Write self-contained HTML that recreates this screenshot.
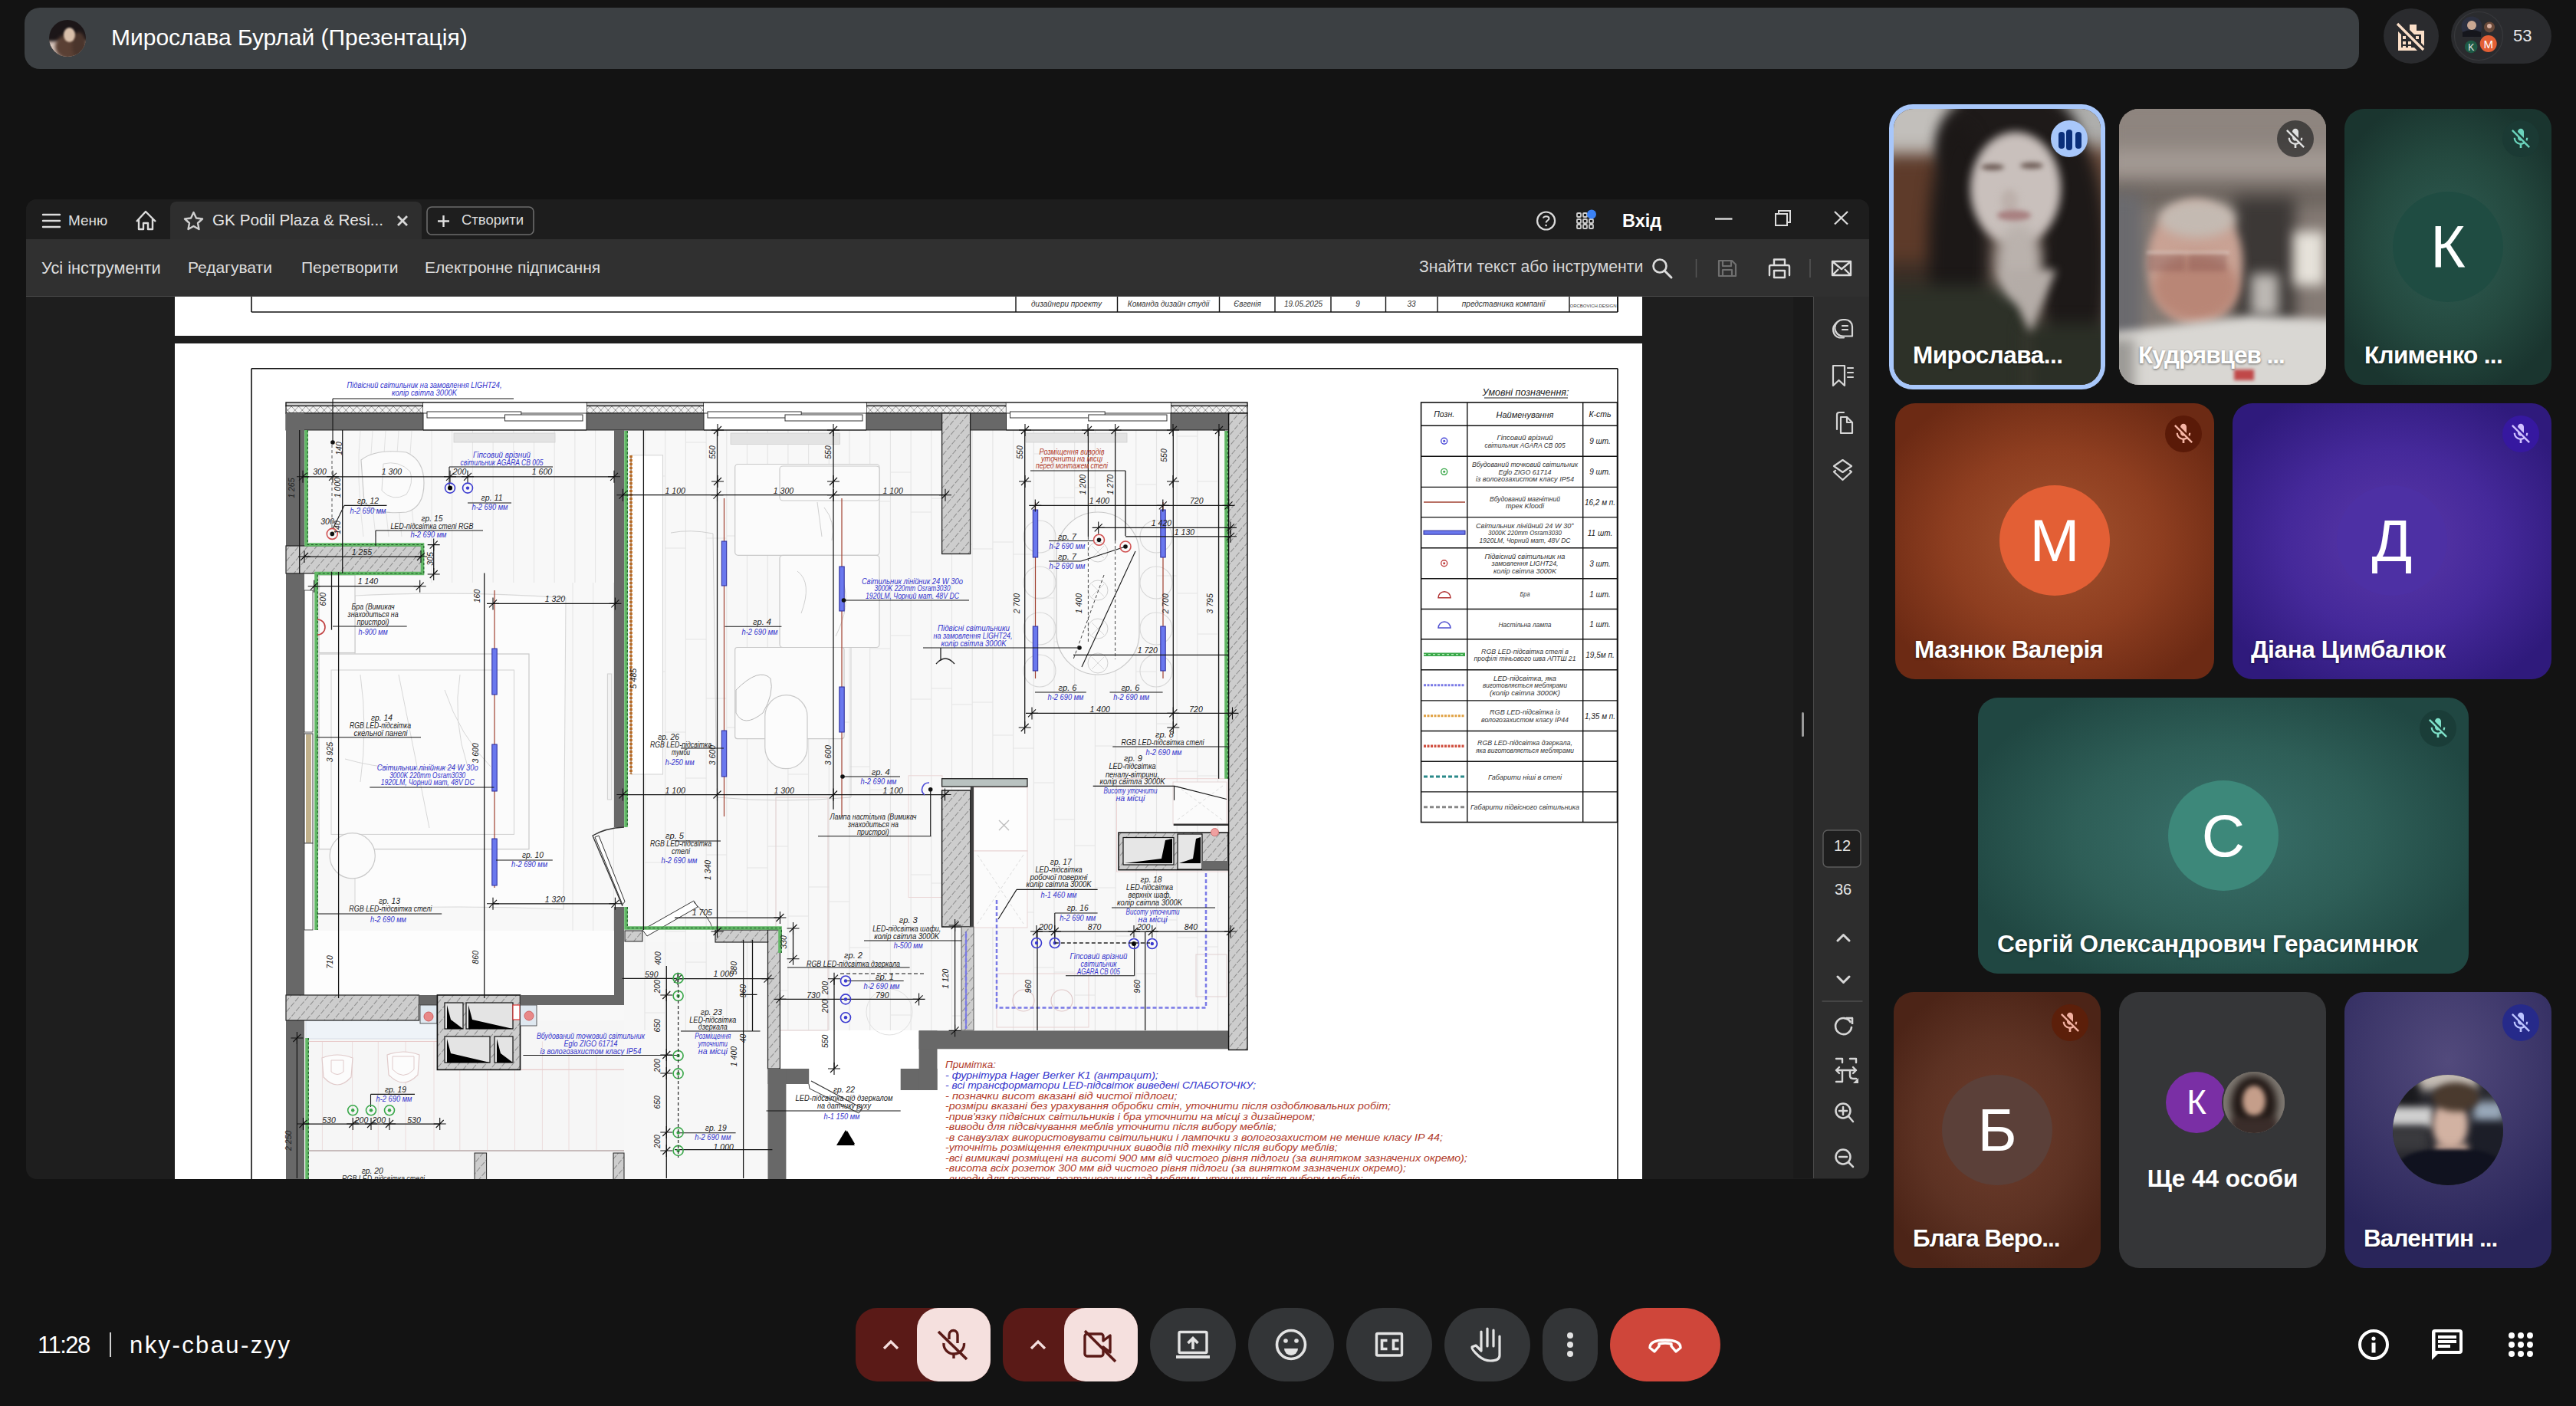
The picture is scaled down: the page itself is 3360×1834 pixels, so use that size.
<!DOCTYPE html>
<html><head><meta charset="utf-8">
<style>
*{margin:0;padding:0;box-sizing:border-box}
html,body{width:3360px;height:1834px;overflow:hidden;background:#131313;font-family:"Liberation Sans",sans-serif;color:#fff}
.a{position:absolute}
.t{position:absolute;white-space:nowrap;line-height:1}
</style></head><body>

<!-- TOP BAR -->
<div class="a" style="left:32px;top:10px;width:3045px;height:80px;border-radius:20px;background:#3c4043"></div>
<div class="a" style="left:64px;top:26px;width:48px;height:48px;border-radius:50%;overflow:hidden;background:#1c1618">
<div class="a" style="left:-6px;top:28px;width:60px;height:30px;background:#d8c6bc;filter:blur(2px)"></div>
<div class="a" style="left:8px;top:18px;width:40px;height:34px;border-radius:50%;background:#5a4034;filter:blur(2px)"></div>
<div class="a" style="left:30px;top:16px;width:18px;height:34px;border-radius:50%;background:#4a352c;filter:blur(2px)"></div>
<div class="a" style="left:19px;top:10px;width:15px;height:19px;border-radius:50%;background:#d8bfaa;filter:blur(1px)"></div>
</div>
<div class="t" style="left:145px;top:34px;font-size:30px;color:#fff">Мирослава Бурлай (Презентація)</div>

<div class="a" style="left:3109px;top:11px;width:72px;height:72px;border-radius:50%;background:#2a2b2e"></div>
<div class="a" style="left:3197px;top:11px;width:131px;height:72px;border-radius:36px;background:#2a2b2e"></div>
<div class="t" style="left:3278px;top:36px;font-size:22px;color:#e8e8e8">53</div>

<!-- WINDOW -->
<div class="a" style="left:34px;top:260px;width:2404px;height:1278px;border-radius:14px;background:#1e1e1e;overflow:hidden">
  <div class="a" style="left:0;top:0;width:2404px;height:52px;background:#1d1d1d"></div>
  <div class="a" style="left:188px;top:3px;width:328px;height:49px;border-radius:8px 8px 0 0;background:#2e2e2e"></div>
  <div class="a" style="left:0;top:52px;width:2404px;height:75px;background:#303030"></div>
  <div class="a" style="left:2331px;top:127px;width:73px;height:1150px;background:#2d2d2d;border-left:1px solid #4a4a4a"></div>
  <div class="a" style="left:0;top:126px;width:2331px;height:1px;background:#4a4a4a"></div>
  <div class="a" style="left:2305px;top:127px;width:26px;height:1150px;background:#1a1a1a"></div>
</div>
<!-- window chrome -->
<svg class="a" style="left:0;top:250px" width="2450" height="140" viewBox="0 250 2450 140" fill="none" stroke="#dcdcdc" stroke-width="2.4">
  <path d="M56 280H78M56 288H78M56 296H78" stroke-linecap="round"/>
  <path d="M178 289L190 276L203 289M181 286V299H187V291H193V299H199V286" stroke-linejoin="round"/>
  <path d="M252.5 277L256 284.5L264 285.5L258 291L259.5 299L252.5 295L245.5 299L247 291L241 285.5L249 284.5Z" stroke-linejoin="round" stroke="#cfcfcf"/>
  <path d="M519 282L531 294M531 282L519 294" stroke-width="2.8" stroke="#d8d8d8"/>
  <rect x="557" y="270" width="139" height="36" rx="6" stroke="#6c6c6c" stroke-width="1.6" fill="#1e1e1e"/>
  <path d="M578.5 281V296M571 288.5H586" stroke-width="2.4" stroke="#e0e0e0"/>
  <circle cx="2016.6" cy="288" r="11.5" stroke-width="2.2"/>
  <path d="M2013 284.5C2013 281.5 2020.5 281.5 2020.5 285C2020.5 287.5 2016.6 287.5 2016.6 290.5" stroke-width="2"/>
  <circle cx="2016.6" cy="294" r="1.3" fill="#dcdcdc" stroke="none"/>
  <g fill="none" stroke="#cfcfcf" stroke-width="1.8">
    <rect x="2057" y="278" width="5" height="5" rx="1"/><rect x="2065" y="278" width="5" height="5" rx="1"/>
    <rect x="2057" y="286" width="5" height="5" rx="1"/><rect x="2065" y="286" width="5" height="5" rx="1"/><rect x="2073" y="286" width="5" height="5" rx="1"/>
    <rect x="2057" y="293" width="5" height="5" rx="1"/><rect x="2065" y="293" width="5" height="5" rx="1"/><rect x="2073" y="293" width="5" height="5" rx="1"/>
  </g>
  <circle cx="2076" cy="279.5" r="6" fill="#3b82f6" stroke="none"/>
  <path d="M2237 285.5H2259.5" stroke-width="2.4"/>
  <path d="M2316 279H2331V294H2316Z M2320 279V275H2335V290H2331" stroke-width="2"/>
  <path d="M2393 276L2410 292.5M2410 276L2393 292.5" stroke-width="2.2"/>
  <circle cx="2165" cy="347" r="8.5" stroke-width="2.6"/>
  <path d="M2171 353L2180 362" stroke-width="3" stroke-linecap="round"/>
  <path d="M2212.5 338V362M2361 338V362" stroke="#555" stroke-width="1.5"/>
  <path d="M2242 340H2259L2264 345V360H2242Z M2247 340V347H2258V340 M2247 360V352H2259V360" stroke="#6f6f6f" stroke-width="2.2" stroke-linejoin="round"/>
  <path d="M2314 346V338.5H2328V346 M2309 359H2308V347.5Q2308 346 2310 346H2332Q2334 346 2334 348V359H2333 M2314 353H2328V362H2314Z" stroke-width="2.4" stroke-linejoin="round"/>
  <path d="M2390 341H2414V359H2390Z M2390 341L2402 351L2414 341 M2390 359L2398 351 M2414 359L2406 351" stroke-width="2.4" stroke-linejoin="round"/>
</svg>
<!-- right doc panel icons -->
<svg class="a" style="left:2366px;top:387px" width="72" height="1150" viewBox="2366 387 72 1150" fill="none" stroke="#d6d6d6" stroke-width="2.2" stroke-linejoin="round" stroke-linecap="round">
  <path d="M2395 421.5A11 11 0 0 0 2399 440.5H2405" />
  <path d="M2404 417H2407A9 9 0 0 1 2416 426V438.5H2404A9 9 0 0 1 2404 417Z"/>
  <path d="M2403 425H2410M2403 430H2410"/>
  <path d="M2391 477H2406V503L2398.5 496L2391 503Z"/>
  <path d="M2410 480H2417M2410 486H2417M2410 492H2417"/>
  <path d="M2396 560V541A3 3 0 0 1 2399 538H2405"/>
  <path d="M2401 544H2409L2416 551V565H2401Z M2409 544V551H2416"/>
  <path d="M2403.5 600L2415 608L2403.5 616L2392 608Z"/>
  <path d="M2394 614L2392 615.5L2403.5 626L2415 615.5L2413 614"/>
  <rect x="2378" y="1083" width="49" height="48" rx="6" fill="#1e1e1e" stroke="#5c5c5c" stroke-width="1.4"/>
  <path d="M2397 1227L2404.5 1219.5L2412 1227M2397 1274L2404.5 1281.5L2412 1274" stroke-width="3"/>
  <path d="M2377 1306H2429" stroke="#4e4e4e" stroke-width="1.4"/>
  <path d="M2413.5 1333A10.5 10.5 0 1 0 2415 1340" stroke-width="2.6"/>
  <path d="M2408 1328H2416V1336" stroke-width="2.6" stroke-linecap="butt"/>
  <path d="M2395 1381H2403V1386M2413 1381H2421V1386M2395 1411H2403V1397M2413 1397V1403Q2413 1407 2417 1407H2421" stroke-width="2.4"/>
  <path d="M2395 1396H2421M2399 1392L2395 1396L2399 1400M2417 1392L2421 1396L2417 1400" stroke-width="2.4"/>
  <path d="M2417 1413H2424V1406Z" fill="#d6d6d6" stroke="none"/>
  <circle cx="2404" cy="1449" r="9.5" stroke-width="2.5"/><path d="M2411 1456L2417 1463M2404 1444V1454M2399 1449H2409" stroke-width="2.5"/>
  <circle cx="2404" cy="1509" r="9.5" stroke-width="2.5"/><path d="M2411 1516L2417 1522M2399 1509H2409" stroke-width="2.5"/>
</svg>
<div class="t" style="left:2392px;top:1093px;font-size:20px;color:#e4e4e4">12</div>
<div class="t" style="left:2393px;top:1150px;font-size:20px;color:#e4e4e4">36</div>
<div class="a" style="left:2350px;top:929px;width:3px;height:32px;border-radius:2px;background:#9a9a9a"></div>
<div class="t" style="left:89px;top:278px;font-size:19px;color:#dedede">Меню</div>
<div class="t" style="left:277px;top:277px;font-size:20.7px;color:#e6e6e6">GK Podil Plaza &amp; Resi...</div>
<div class="t" style="left:602px;top:278px;font-size:18.5px;color:#dcdcdc">Створити</div>
<div class="t" style="left:2116px;top:277px;font-size:23.5px;font-weight:bold;color:#fff">Вхід</div>
<div class="t" style="left:54px;top:339px;font-size:21.8px;color:#dedede">Усі інструменти</div>
<div class="t" style="left:245px;top:338px;font-size:21px;color:#dedede">Редагувати</div>
<div class="t" style="left:393px;top:338px;font-size:21px;color:#dedede">Перетворити</div>
<div class="t" style="left:554px;top:338px;font-size:21px;color:#dedede">Електронне підписання</div>
<div class="t" style="left:1851px;top:337px;font-size:21.2px;color:#d8d8d8">Знайти текст або інструменти</div>

<!-- DOC PAGE -->
<div class="a" style="left:228px;top:387px;width:1914px;height:51px;background:#fff"></div>
<div class="a" style="left:228px;top:448px;width:1914px;height:1090px;background:#fff"></div>
<!--PLAN_START--><svg class="a" style="left:228px;top:387px" width="1914" height="1151" viewBox="228 387 1914 1151" font-family="Liberation Sans, sans-serif"><defs>
<pattern id="hat" width="9" height="9" patternUnits="userSpaceOnUse" patternTransform="rotate(40)">
<rect width="9" height="9" fill="#cdcdcd"/><line x1="0" y1="0" x2="0" y2="9" stroke="#6a6a6a" stroke-width="1.3" stroke-dasharray="6 2"/></pattern>
<pattern id="xh" width="9.5" height="10" patternUnits="userSpaceOnUse">
<rect width="9.5" height="10" fill="#f2f2f2"/><path d="M0 0L9.5 10M9.5 0L0 10" stroke="#8a8a8a" stroke-width="0.9"/></pattern>
<clipPath id="pg"><rect x="228" y="387" width="1914" height="1151"/></clipPath>
</defs><g clip-path="url(#pg)"><line x1="328" y1="407" x2="2110" y2="407" stroke="#111" stroke-width="1.6" /><line x1="328" y1="387" x2="328" y2="407" stroke="#111" stroke-width="1.6" /><line x1="1325" y1="387" x2="1325" y2="407" stroke="#111" stroke-width="1.4" /><line x1="1457.5" y1="387" x2="1457.5" y2="407" stroke="#111" stroke-width="1.4" /><line x1="1590.5" y1="387" x2="1590.5" y2="407" stroke="#111" stroke-width="1.4" /><line x1="1663" y1="387" x2="1663" y2="407" stroke="#111" stroke-width="1.4" /><line x1="1736" y1="387" x2="1736" y2="407" stroke="#111" stroke-width="1.4" /><line x1="1807.5" y1="387" x2="1807.5" y2="407" stroke="#111" stroke-width="1.4" /><line x1="1875" y1="387" x2="1875" y2="407" stroke="#111" stroke-width="1.4" /><line x1="2047" y1="387" x2="2047" y2="407" stroke="#111" stroke-width="1.4" /><line x1="2110" y1="387" x2="2110" y2="407" stroke="#111" stroke-width="1.4" /><text x="1391" y="400" font-size="10" fill="#333" text-anchor="middle" font-style="italic">дизайнери проекту</text><text x="1524" y="400" font-size="10" fill="#333" text-anchor="middle" font-style="italic">Команда дизайн студії</text><text x="1627" y="400" font-size="10" fill="#333" text-anchor="middle" font-style="italic">Євгенія</text><text x="1700" y="400" font-size="10" fill="#333" text-anchor="middle" font-style="italic">19.05.2025</text><text x="1771" y="400" font-size="10" fill="#333" text-anchor="middle" font-style="italic">9</text><text x="1841" y="400" font-size="10" fill="#333" text-anchor="middle" font-style="italic">33</text><text x="1961" y="400" font-size="10" fill="#333" text-anchor="middle" font-style="italic">представника компанії</text><text x="2078" y="401" font-size="6" fill="#333" text-anchor="middle" >ORCBOVICH.DESIGN</text><line x1="328" y1="480.7" x2="2110" y2="480.7" stroke="#111" stroke-width="1.6" /><line x1="328" y1="480.7" x2="328" y2="1540" stroke="#111" stroke-width="1.6" /><line x1="2110" y1="387" x2="2110" y2="407" stroke="#111" stroke-width="1.6" /><line x1="2110" y1="480.7" x2="2110" y2="1540" stroke="#111" stroke-width="1.6" /><rect x="397" y="561" width="1206" height="783" fill="#f8f8f8" /><rect x="397" y="1214" width="404" height="84" fill="#fdfdfd" /><rect x="399" y="1331" width="415" height="209" fill="#f6f6f6" /><rect x="814" y="1229" width="188" height="311" fill="#f7f7f7" /><line x1="841.0" y1="561" x2="841.0" y2="1344" stroke="#e4e4e4" stroke-width="1.1" /><line x1="867.7" y1="561" x2="867.7" y2="1344" stroke="#e4e4e4" stroke-width="1.1" /><line x1="894.4" y1="561" x2="894.4" y2="1344" stroke="#e4e4e4" stroke-width="1.1" /><line x1="921.1" y1="561" x2="921.1" y2="1344" stroke="#e4e4e4" stroke-width="1.1" /><line x1="947.8" y1="561" x2="947.8" y2="1344" stroke="#e4e4e4" stroke-width="1.1" /><line x1="974.5" y1="561" x2="974.5" y2="1344" stroke="#e4e4e4" stroke-width="1.1" /><line x1="1001.2" y1="561" x2="1001.2" y2="1344" stroke="#e4e4e4" stroke-width="1.1" /><line x1="1027.9" y1="561" x2="1027.9" y2="1344" stroke="#e4e4e4" stroke-width="1.1" /><line x1="1054.6" y1="561" x2="1054.6" y2="1344" stroke="#e4e4e4" stroke-width="1.1" /><line x1="1081.3" y1="561" x2="1081.3" y2="1344" stroke="#e4e4e4" stroke-width="1.1" /><line x1="1108.0" y1="561" x2="1108.0" y2="1344" stroke="#e4e4e4" stroke-width="1.1" /><line x1="1134.7" y1="561" x2="1134.7" y2="1344" stroke="#e4e4e4" stroke-width="1.1" /><line x1="1161.4" y1="561" x2="1161.4" y2="1344" stroke="#e4e4e4" stroke-width="1.1" /><line x1="1188.1" y1="561" x2="1188.1" y2="1344" stroke="#e4e4e4" stroke-width="1.1" /><line x1="1214.8" y1="561" x2="1214.8" y2="1344" stroke="#e4e4e4" stroke-width="1.1" /><line x1="1241.5" y1="561" x2="1241.5" y2="1344" stroke="#e4e4e4" stroke-width="1.1" /><line x1="1268.2" y1="561" x2="1268.2" y2="1344" stroke="#e4e4e4" stroke-width="1.1" /><line x1="1294.9" y1="561" x2="1294.9" y2="1344" stroke="#e4e4e4" stroke-width="1.1" /><line x1="1321.6" y1="561" x2="1321.6" y2="1344" stroke="#e4e4e4" stroke-width="1.1" /><line x1="1348.3" y1="561" x2="1348.3" y2="1344" stroke="#e4e4e4" stroke-width="1.1" /><line x1="1375.0" y1="561" x2="1375.0" y2="1344" stroke="#e4e4e4" stroke-width="1.1" /><line x1="1401.6999999999998" y1="561" x2="1401.6999999999998" y2="1344" stroke="#e4e4e4" stroke-width="1.1" /><line x1="1428.4" y1="561" x2="1428.4" y2="1344" stroke="#e4e4e4" stroke-width="1.1" /><line x1="1455.1" y1="561" x2="1455.1" y2="1344" stroke="#e4e4e4" stroke-width="1.1" /><line x1="1481.8" y1="561" x2="1481.8" y2="1344" stroke="#e4e4e4" stroke-width="1.1" /><line x1="1508.5" y1="561" x2="1508.5" y2="1344" stroke="#e4e4e4" stroke-width="1.1" /><line x1="1535.1999999999998" y1="561" x2="1535.1999999999998" y2="1344" stroke="#e4e4e4" stroke-width="1.1" /><line x1="1561.9" y1="561" x2="1561.9" y2="1344" stroke="#e4e4e4" stroke-width="1.1" /><line x1="1588.6" y1="561" x2="1588.6" y2="1344" stroke="#e4e4e4" stroke-width="1.1" /><line x1="841.0" y1="621" x2="867.7" y2="621" stroke="#e4e4e4" stroke-width="1.0" /><line x1="841.0" y1="876" x2="867.7" y2="876" stroke="#e4e4e4" stroke-width="1.0" /><line x1="841.0" y1="1125" x2="867.7" y2="1125" stroke="#e4e4e4" stroke-width="1.0" /><line x1="841.0" y1="1321" x2="867.7" y2="1321" stroke="#e4e4e4" stroke-width="1.0" /><line x1="867.7" y1="715" x2="894.4000000000001" y2="715" stroke="#e4e4e4" stroke-width="1.0" /><line x1="867.7" y1="955" x2="894.4000000000001" y2="955" stroke="#e4e4e4" stroke-width="1.0" /><line x1="867.7" y1="1215" x2="894.4000000000001" y2="1215" stroke="#e4e4e4" stroke-width="1.0" /><line x1="894.4" y1="577" x2="921.1" y2="577" stroke="#e4e4e4" stroke-width="1.0" /><line x1="894.4" y1="834" x2="921.1" y2="834" stroke="#e4e4e4" stroke-width="1.0" /><line x1="894.4" y1="1015" x2="921.1" y2="1015" stroke="#e4e4e4" stroke-width="1.0" /><line x1="894.4" y1="1255" x2="921.1" y2="1255" stroke="#e4e4e4" stroke-width="1.0" /><line x1="921.1" y1="702" x2="947.8000000000001" y2="702" stroke="#e4e4e4" stroke-width="1.0" /><line x1="921.1" y1="911" x2="947.8000000000001" y2="911" stroke="#e4e4e4" stroke-width="1.0" /><line x1="921.1" y1="1115" x2="947.8000000000001" y2="1115" stroke="#e4e4e4" stroke-width="1.0" /><line x1="947.8" y1="699" x2="974.5" y2="699" stroke="#e4e4e4" stroke-width="1.0" /><line x1="947.8" y1="949" x2="974.5" y2="949" stroke="#e4e4e4" stroke-width="1.0" /><line x1="947.8" y1="1189" x2="974.5" y2="1189" stroke="#e4e4e4" stroke-width="1.0" /><line x1="974.5" y1="724" x2="1001.2" y2="724" stroke="#e4e4e4" stroke-width="1.0" /><line x1="974.5" y1="923" x2="1001.2" y2="923" stroke="#e4e4e4" stroke-width="1.0" /><line x1="974.5" y1="1132" x2="1001.2" y2="1132" stroke="#e4e4e4" stroke-width="1.0" /><line x1="1001.2" y1="694" x2="1027.9" y2="694" stroke="#e4e4e4" stroke-width="1.0" /><line x1="1001.2" y1="923" x2="1027.9" y2="923" stroke="#e4e4e4" stroke-width="1.0" /><line x1="1001.2" y1="1104" x2="1027.9" y2="1104" stroke="#e4e4e4" stroke-width="1.0" /><line x1="1001.2" y1="1292" x2="1027.9" y2="1292" stroke="#e4e4e4" stroke-width="1.0" /><line x1="1027.9" y1="755" x2="1054.6000000000001" y2="755" stroke="#e4e4e4" stroke-width="1.0" /><line x1="1027.9" y1="1010" x2="1054.6000000000001" y2="1010" stroke="#e4e4e4" stroke-width="1.0" /><line x1="1027.9" y1="1195" x2="1054.6000000000001" y2="1195" stroke="#e4e4e4" stroke-width="1.0" /><line x1="1054.6" y1="760" x2="1081.3" y2="760" stroke="#e4e4e4" stroke-width="1.0" /><line x1="1054.6" y1="943" x2="1081.3" y2="943" stroke="#e4e4e4" stroke-width="1.0" /><line x1="1054.6" y1="1157" x2="1081.3" y2="1157" stroke="#e4e4e4" stroke-width="1.0" /><line x1="1081.3" y1="713" x2="1108.0" y2="713" stroke="#e4e4e4" stroke-width="1.0" /><line x1="1081.3" y1="942" x2="1108.0" y2="942" stroke="#e4e4e4" stroke-width="1.0" /><line x1="1081.3" y1="1176" x2="1108.0" y2="1176" stroke="#e4e4e4" stroke-width="1.0" /><line x1="1108.0" y1="747" x2="1134.7" y2="747" stroke="#e4e4e4" stroke-width="1.0" /><line x1="1108.0" y1="1000" x2="1134.7" y2="1000" stroke="#e4e4e4" stroke-width="1.0" /><line x1="1108.0" y1="1236" x2="1134.7" y2="1236" stroke="#e4e4e4" stroke-width="1.0" /><line x1="1134.7" y1="654" x2="1161.4" y2="654" stroke="#e4e4e4" stroke-width="1.0" /><line x1="1134.7" y1="846" x2="1161.4" y2="846" stroke="#e4e4e4" stroke-width="1.0" /><line x1="1134.7" y1="1030" x2="1161.4" y2="1030" stroke="#e4e4e4" stroke-width="1.0" /><line x1="1134.7" y1="1227" x2="1161.4" y2="1227" stroke="#e4e4e4" stroke-width="1.0" /><line x1="1161.4" y1="616" x2="1188.1000000000001" y2="616" stroke="#e4e4e4" stroke-width="1.0" /><line x1="1161.4" y1="829" x2="1188.1000000000001" y2="829" stroke="#e4e4e4" stroke-width="1.0" /><line x1="1161.4" y1="1064" x2="1188.1000000000001" y2="1064" stroke="#e4e4e4" stroke-width="1.0" /><line x1="1161.4" y1="1324" x2="1188.1000000000001" y2="1324" stroke="#e4e4e4" stroke-width="1.0" /><line x1="1188.1" y1="668" x2="1214.8" y2="668" stroke="#e4e4e4" stroke-width="1.0" /><line x1="1188.1" y1="912" x2="1214.8" y2="912" stroke="#e4e4e4" stroke-width="1.0" /><line x1="1188.1" y1="1141" x2="1214.8" y2="1141" stroke="#e4e4e4" stroke-width="1.0" /><line x1="1214.8" y1="650" x2="1241.5" y2="650" stroke="#e4e4e4" stroke-width="1.0" /><line x1="1214.8" y1="898" x2="1241.5" y2="898" stroke="#e4e4e4" stroke-width="1.0" /><line x1="1214.8" y1="1152" x2="1241.5" y2="1152" stroke="#e4e4e4" stroke-width="1.0" /><line x1="1241.5" y1="710" x2="1268.2" y2="710" stroke="#e4e4e4" stroke-width="1.0" /><line x1="1241.5" y1="919" x2="1268.2" y2="919" stroke="#e4e4e4" stroke-width="1.0" /><line x1="1241.5" y1="1142" x2="1268.2" y2="1142" stroke="#e4e4e4" stroke-width="1.0" /><line x1="1241.5" y1="1325" x2="1268.2" y2="1325" stroke="#e4e4e4" stroke-width="1.0" /><line x1="1268.2" y1="716" x2="1294.9" y2="716" stroke="#e4e4e4" stroke-width="1.0" /><line x1="1268.2" y1="916" x2="1294.9" y2="916" stroke="#e4e4e4" stroke-width="1.0" /><line x1="1268.2" y1="1137" x2="1294.9" y2="1137" stroke="#e4e4e4" stroke-width="1.0" /><line x1="1294.9" y1="707" x2="1321.6000000000001" y2="707" stroke="#e4e4e4" stroke-width="1.0" /><line x1="1294.9" y1="959" x2="1321.6000000000001" y2="959" stroke="#e4e4e4" stroke-width="1.0" /><line x1="1294.9" y1="1152" x2="1321.6000000000001" y2="1152" stroke="#e4e4e4" stroke-width="1.0" /><line x1="1321.6" y1="723" x2="1348.3" y2="723" stroke="#e4e4e4" stroke-width="1.0" /><line x1="1321.6" y1="976" x2="1348.3" y2="976" stroke="#e4e4e4" stroke-width="1.0" /><line x1="1321.6" y1="1190" x2="1348.3" y2="1190" stroke="#e4e4e4" stroke-width="1.0" /><line x1="1348.3" y1="592" x2="1375.0" y2="592" stroke="#e4e4e4" stroke-width="1.0" /><line x1="1348.3" y1="780" x2="1375.0" y2="780" stroke="#e4e4e4" stroke-width="1.0" /><line x1="1348.3" y1="1021" x2="1375.0" y2="1021" stroke="#e4e4e4" stroke-width="1.0" /><line x1="1348.3" y1="1262" x2="1375.0" y2="1262" stroke="#e4e4e4" stroke-width="1.0" /><line x1="1375.0" y1="649" x2="1401.7" y2="649" stroke="#e4e4e4" stroke-width="1.0" /><line x1="1375.0" y1="837" x2="1401.7" y2="837" stroke="#e4e4e4" stroke-width="1.0" /><line x1="1375.0" y1="1069" x2="1401.7" y2="1069" stroke="#e4e4e4" stroke-width="1.0" /><line x1="1375.0" y1="1268" x2="1401.7" y2="1268" stroke="#e4e4e4" stroke-width="1.0" /><line x1="1401.6999999999998" y1="636" x2="1428.3999999999999" y2="636" stroke="#e4e4e4" stroke-width="1.0" /><line x1="1401.6999999999998" y1="870" x2="1428.3999999999999" y2="870" stroke="#e4e4e4" stroke-width="1.0" /><line x1="1401.6999999999998" y1="1103" x2="1428.3999999999999" y2="1103" stroke="#e4e4e4" stroke-width="1.0" /><line x1="1401.6999999999998" y1="1298" x2="1428.3999999999999" y2="1298" stroke="#e4e4e4" stroke-width="1.0" /><line x1="1428.4" y1="715" x2="1455.1000000000001" y2="715" stroke="#e4e4e4" stroke-width="1.0" /><line x1="1428.4" y1="973" x2="1455.1000000000001" y2="973" stroke="#e4e4e4" stroke-width="1.0" /><line x1="1428.4" y1="1158" x2="1455.1000000000001" y2="1158" stroke="#e4e4e4" stroke-width="1.0" /><line x1="1455.1" y1="744" x2="1481.8" y2="744" stroke="#e4e4e4" stroke-width="1.0" /><line x1="1455.1" y1="999" x2="1481.8" y2="999" stroke="#e4e4e4" stroke-width="1.0" /><line x1="1455.1" y1="1221" x2="1481.8" y2="1221" stroke="#e4e4e4" stroke-width="1.0" /><line x1="1481.8" y1="632" x2="1508.5" y2="632" stroke="#e4e4e4" stroke-width="1.0" /><line x1="1481.8" y1="876" x2="1508.5" y2="876" stroke="#e4e4e4" stroke-width="1.0" /><line x1="1481.8" y1="1086" x2="1508.5" y2="1086" stroke="#e4e4e4" stroke-width="1.0" /><line x1="1481.8" y1="1270" x2="1508.5" y2="1270" stroke="#e4e4e4" stroke-width="1.0" /><line x1="1508.5" y1="562" x2="1535.2" y2="562" stroke="#e4e4e4" stroke-width="1.0" /><line x1="1508.5" y1="751" x2="1535.2" y2="751" stroke="#e4e4e4" stroke-width="1.0" /><line x1="1508.5" y1="944" x2="1535.2" y2="944" stroke="#e4e4e4" stroke-width="1.0" /><line x1="1508.5" y1="1200" x2="1535.2" y2="1200" stroke="#e4e4e4" stroke-width="1.0" /><line x1="1535.1999999999998" y1="569" x2="1561.8999999999999" y2="569" stroke="#e4e4e4" stroke-width="1.0" /><line x1="1535.1999999999998" y1="774" x2="1561.8999999999999" y2="774" stroke="#e4e4e4" stroke-width="1.0" /><line x1="1535.1999999999998" y1="1006" x2="1561.8999999999999" y2="1006" stroke="#e4e4e4" stroke-width="1.0" /><line x1="1535.1999999999998" y1="1223" x2="1561.8999999999999" y2="1223" stroke="#e4e4e4" stroke-width="1.0" /><line x1="1561.9" y1="628" x2="1588.6000000000001" y2="628" stroke="#e4e4e4" stroke-width="1.0" /><line x1="1561.9" y1="827" x2="1588.6000000000001" y2="827" stroke="#e4e4e4" stroke-width="1.0" /><line x1="1561.9" y1="1012" x2="1588.6000000000001" y2="1012" stroke="#e4e4e4" stroke-width="1.0" /><line x1="1561.9" y1="1235" x2="1588.6000000000001" y2="1235" stroke="#e4e4e4" stroke-width="1.0" /><line x1="563.0" y1="561" x2="563.0" y2="760" stroke="#e4e4e4" stroke-width="1.0" /><line x1="589.7" y1="561" x2="589.7" y2="760" stroke="#e4e4e4" stroke-width="1.0" /><line x1="616.4" y1="561" x2="616.4" y2="760" stroke="#e4e4e4" stroke-width="1.0" /><line x1="643.1" y1="561" x2="643.1" y2="760" stroke="#e4e4e4" stroke-width="1.0" /><line x1="669.8" y1="561" x2="669.8" y2="760" stroke="#e4e4e4" stroke-width="1.0" /><line x1="696.5" y1="561" x2="696.5" y2="760" stroke="#e4e4e4" stroke-width="1.0" /><line x1="723.2" y1="561" x2="723.2" y2="760" stroke="#e4e4e4" stroke-width="1.0" /><line x1="749.9" y1="561" x2="749.9" y2="760" stroke="#e4e4e4" stroke-width="1.0" /><line x1="776.6" y1="561" x2="776.6" y2="760" stroke="#e4e4e4" stroke-width="1.0" /><line x1="747.0" y1="760" x2="747.0" y2="1214" stroke="#e4e4e4" stroke-width="1.0" /><line x1="773.7" y1="760" x2="773.7" y2="1214" stroke="#e4e4e4" stroke-width="1.0" /><line x1="800.4" y1="760" x2="800.4" y2="1214" stroke="#e4e4e4" stroke-width="1.0" /><path d="M470 562Q464 620 474 700" fill="none" stroke="#e2e2e2" stroke-width="1"/><path d="M486 562Q480 620 490 700" fill="none" stroke="#e2e2e2" stroke-width="1"/><path d="M503 562Q497 620 507 700" fill="none" stroke="#e2e2e2" stroke-width="1"/><path d="M520 562Q514 620 524 700" fill="none" stroke="#e2e2e2" stroke-width="1"/><path d="M537 562Q531 620 541 700" fill="none" stroke="#e2e2e2" stroke-width="1"/><line x1="420.4" y1="1358.5" x2="420.4" y2="1501" stroke="#ecdcdc" stroke-width="1.0" /><line x1="459.6" y1="1358.5" x2="459.6" y2="1501" stroke="#ecdcdc" stroke-width="1.0" /><line x1="493.3" y1="1358.5" x2="493.3" y2="1501" stroke="#ecdcdc" stroke-width="1.0" /><line x1="529" y1="1358.5" x2="529" y2="1501" stroke="#ecdcdc" stroke-width="1.0" /><line x1="566" y1="1358.5" x2="566" y2="1501" stroke="#ecdcdc" stroke-width="1.0" /><line x1="599.8" y1="1358.5" x2="599.8" y2="1501" stroke="#ecdcdc" stroke-width="1.0" /><line x1="635.6" y1="1358.5" x2="635.6" y2="1501" stroke="#ecdcdc" stroke-width="1.0" /><line x1="671.5" y1="1358.5" x2="671.5" y2="1501" stroke="#ecdcdc" stroke-width="1.0" /><line x1="707.4" y1="1358.5" x2="707.4" y2="1501" stroke="#ecdcdc" stroke-width="1.0" /><line x1="742" y1="1358.5" x2="742" y2="1501" stroke="#ecdcdc" stroke-width="1.0" /><line x1="778" y1="1358.5" x2="778" y2="1501" stroke="#ecdcdc" stroke-width="1.0" /><line x1="398.7" y1="1358.5" x2="570.4" y2="1358.5" stroke="#e8caca" stroke-width="1.2" /><line x1="570" y1="1395.4" x2="814" y2="1395.4" stroke="#e8caca" stroke-width="1.2" /><line x1="399" y1="1501" x2="814" y2="1501" stroke="#c8bcbc" stroke-width="2.2" /><rect x="399" y="1331" width="171.39999999999998" height="24" fill="#eef3f8" stroke="#cfd8e0" stroke-width="0.8" /><path d="M471 600Q490 585 530 590Q553 600 553 630Q553 662 530 668Q490 672 475 655Z" fill="#fbfbfb" stroke="#c9c9c9" stroke-width="1.2"/><path d="M500 605Q520 600 535 615Q540 630 530 645Q512 655 498 640Z" fill="none" stroke="#d6d6d6" stroke-width="1"/><path d="M463 777Q600 770 738 780L735 1186Q600 1180 463 1186Z" fill="#fcfcfc" stroke="#d8d8d8" stroke-width="1.1"/><rect x="416" y="750" width="47" height="101.5" fill="#fbfbfb" stroke="#c9c9c9" stroke-width="1.1" /><rect x="416" y="853" width="274" height="254.5999999999999" fill="#fbfbfb" stroke="#c9c9c9" stroke-width="1.2" /><rect x="432" y="874" width="238.5" height="214.4000000000001" fill="none" stroke="#d2d2d2" stroke-width="1.0" /><path d="M470 880Q480 950 470 1020M520 880Q540 980 560 1080M580 900Q600 960 640 1000M450 990Q520 1010 600 1000M600 880Q590 940 610 1000" fill="none" stroke="#d7d7d7" stroke-width="1"/><circle cx="459.7" cy="1116.3" r="29.6" fill="#fbfbfb" stroke="#c9c9c9" stroke-width="1.2"/><rect x="792.4" y="879" width="5.300000000000068" height="164" fill="#f2f2f2" stroke="#d0d0d0" stroke-width="1" /><rect x="823.6" y="593.8" width="40.89999999999998" height="416.20000000000005" fill="#ffffff" stroke="#d6d6d6" stroke-width="1.1" /><path d="M875 695Q900 690 930 696L935 1040Q1020 1048 1110 1040L1110 700" fill="none" stroke="#d0d0d0" stroke-width="1"/><rect x="958.7" y="605.5" width="188.3" height="118.8" rx="4" fill="#fbfbfb" stroke="#c9c9c9" stroke-width="1.2"/><rect x="1017" y="608" width="130" height="45" rx="4" fill="#fbfbfb" stroke="#c9c9c9" stroke-width="1.1"/><rect x="1017" y="724.3" width="130" height="120.2" rx="4" fill="#fbfbfb" stroke="#c9c9c9" stroke-width="1.2"/><rect x="958.7" y="844.5" width="142.3" height="119.1" rx="3" fill="#fbfbfb" stroke="#c9c9c9" stroke-width="1.2"/><rect x="997.8" y="906.7" width="55.2" height="96" rx="27.6" fill="#fcfcfc" stroke="#c9c9c9" stroke-width="1.2"/><path d="M1066 655L1072 700M1075 662Q1090 680 1085 705M1040 745Q1060 760 1045 800M1100 760Q1110 790 1090 830" fill="none" stroke="#d0d0d0" stroke-width="1"/><path d="M960 900Q990 870 1005 885Q1010 905 995 930Q970 950 960 930Z" fill="none" stroke="#b8b8b8" stroke-width="1"/><rect x="953" y="565" width="142.5999999999999" height="14.600000000000023" fill="#e3e3e3" stroke="#d0d0d0" stroke-width="0.8" /><rect x="592" y="565" width="132" height="12" fill="#e3e3e3" stroke="#d0d0d0" stroke-width="0.8" /><rect x="1338" y="565" width="132" height="12" fill="#e3e3e3" stroke="#d0d0d0" stroke-width="0.8" /><rect x="1378" y="668" width="108" height="212" rx="54" fill="#fafafa" stroke="#c9c9c9" stroke-width="1.2"/><circle cx="1356" cy="700" r="21" fill="none" stroke="#d6d6d6" stroke-width="1.1"/><circle cx="1508" cy="700" r="21" fill="none" stroke="#d6d6d6" stroke-width="1.1"/><circle cx="1356" cy="760" r="21" fill="none" stroke="#d6d6d6" stroke-width="1.1"/><circle cx="1508" cy="760" r="21" fill="none" stroke="#d6d6d6" stroke-width="1.1"/><circle cx="1356" cy="820" r="21" fill="none" stroke="#d6d6d6" stroke-width="1.1"/><circle cx="1508" cy="820" r="21" fill="none" stroke="#d6d6d6" stroke-width="1.1"/><circle cx="1356" cy="875" r="21" fill="none" stroke="#d6d6d6" stroke-width="1.1"/><circle cx="1508" cy="875" r="21" fill="none" stroke="#d6d6d6" stroke-width="1.1"/><circle cx="1432" cy="720" r="13" fill="none" stroke="#cfcfcf" stroke-width="1"/><path d="M1424 712L1440 728M1440 712L1424 728" stroke="#d4d4d4" stroke-width="0.9"/><circle cx="1432" cy="770" r="13" fill="none" stroke="#cfcfcf" stroke-width="1"/><path d="M1424 762L1440 778M1440 762L1424 778" stroke="#d4d4d4" stroke-width="0.9"/><circle cx="1432" cy="820" r="13" fill="none" stroke="#cfcfcf" stroke-width="1"/><path d="M1424 812L1440 828M1440 812L1424 828" stroke="#d4d4d4" stroke-width="0.9"/><circle cx="1432" cy="865" r="13" fill="none" stroke="#cfcfcf" stroke-width="1"/><path d="M1424 857L1440 873M1440 857L1424 873" stroke="#d4d4d4" stroke-width="0.9"/><rect x="1185" y="1011.8" width="44" height="158.70000000000005" fill="none" stroke="#ead6d6" stroke-width="1" /><rect x="1270" y="1027" width="70" height="83" fill="#fdfdfd" stroke="#e7d3d3" stroke-width="1" /><rect x="1270" y="1110" width="70" height="100" fill="#fbfbfb" stroke="#e7d3d3" stroke-width="1" /><path d="M1303 1070L1316 1083M1316 1070L1303 1083" stroke="#bbb" stroke-width="1.3"/><path d="M1275 1115L1335 1205M1335 1115L1275 1205" stroke="#dcdcdc" stroke-width="1" stroke-dasharray="4 3"/><rect x="1456.5" y="1015.7" width="145.5" height="121.29999999999995" fill="none" stroke="#ecd4d4" stroke-width="1" /><rect x="1530" y="1020" width="70" height="55" fill="#fbfbfb" stroke="#e5d5d5" stroke-width="1" /><path d="M1535 1025L1595 1070M1595 1025L1535 1070" stroke="#dcdcdc" stroke-width="1" stroke-dasharray="4 3"/><rect x="1560" y="1245" width="40" height="55" fill="none" stroke="#e0d0d0" stroke-width="1" /><rect x="1300" y="1270" width="120" height="70" fill="none" stroke="#e8d2d2" stroke-width="1" /><circle cx="1335" cy="1305" r="14" fill="none" stroke="#e0c8c8" stroke-width="1.2"/><circle cx="1385" cy="1305" r="14" fill="none" stroke="#e0c8c8" stroke-width="1.2"/><path d="M420 1380Q440 1372 460 1380L458 1405Q440 1425 422 1405Z" fill="#fcfcfc" stroke="#e0caca" stroke-width="1.2"/><path d="M432 1383H448V1398Q440 1405 432 1398Z" fill="none" stroke="#e0caca" stroke-width="1"/><path d="M505 1376Q526 1368 547 1376L545 1402Q526 1422 507 1402Z" fill="#fcfcfc" stroke="#e0caca" stroke-width="1.2"/><path d="M512 1378H540V1395Q526 1410 512 1395Z" fill="none" stroke="#e0caca" stroke-width="1"/><rect x="1012" y="1040" width="68" height="304" fill="none" stroke="#e2d2d2" stroke-width="1.2" /><circle cx="1160" cy="1320" r="30" fill="none" stroke="#e0e0e0" stroke-width="1"/><rect x="373" y="525" width="179" height="4.5" fill="#d4d4d4" stroke="#111" stroke-width="1.4" /><rect x="373" y="529.5" width="179" height="9.5" fill="url(#xh)" stroke="#111" stroke-width="1.2" /><rect x="765" y="525" width="153" height="4.5" fill="#d4d4d4" stroke="#111" stroke-width="1.4" /><rect x="765" y="529.5" width="153" height="9.5" fill="url(#xh)" stroke="#111" stroke-width="1.2" /><rect x="1130" y="525" width="182.5" height="4.5" fill="#d4d4d4" stroke="#111" stroke-width="1.4" /><rect x="1130" y="529.5" width="182.5" height="9.5" fill="url(#xh)" stroke="#111" stroke-width="1.2" /><rect x="1527" y="525" width="100" height="4.5" fill="#d4d4d4" stroke="#111" stroke-width="1.4" /><rect x="1527" y="529.5" width="100" height="9.5" fill="url(#xh)" stroke="#111" stroke-width="1.2" /><rect x="552" y="525" width="213" height="36" fill="#ffffff" /><line x1="552" y1="525" x2="765" y2="525" stroke="#222" stroke-width="1.3" /><line x1="552" y1="539" x2="765" y2="539" stroke="#333" stroke-width="1.0" /><rect x="557" y="537" width="122.79999999999995" height="8" fill="#fff" stroke="#333" stroke-width="1.0" /><rect x="658.5" y="541" width="101.5" height="8" fill="#fff" stroke="#333" stroke-width="1.0" /><line x1="552" y1="561" x2="765" y2="561" stroke="#222" stroke-width="1.3" /><rect x="918" y="525" width="212" height="36" fill="#ffffff" /><line x1="918" y1="525" x2="1130" y2="525" stroke="#222" stroke-width="1.3" /><line x1="918" y1="539" x2="1130" y2="539" stroke="#333" stroke-width="1.0" /><rect x="923" y="537" width="122.20000000000005" height="8" fill="#fff" stroke="#333" stroke-width="1.0" /><rect x="1024.0" y="541" width="101.0" height="8" fill="#fff" stroke="#333" stroke-width="1.0" /><line x1="918" y1="561" x2="1130" y2="561" stroke="#222" stroke-width="1.3" /><rect x="1312.5" y="525" width="214.5" height="36" fill="#ffffff" /><line x1="1312.5" y1="525" x2="1527" y2="525" stroke="#222" stroke-width="1.3" /><line x1="1312.5" y1="539" x2="1527" y2="539" stroke="#333" stroke-width="1.0" /><rect x="1317.5" y="537" width="123.70000000000005" height="8" fill="#fff" stroke="#333" stroke-width="1.0" /><rect x="1419.75" y="541" width="102.25" height="8" fill="#fff" stroke="#333" stroke-width="1.0" /><line x1="1312.5" y1="561" x2="1527" y2="561" stroke="#222" stroke-width="1.3" /><rect x="373" y="539" width="179" height="22" fill="#686868" stroke="#222" stroke-width="1.0" /><rect x="765" y="539" width="153" height="22" fill="#686868" stroke="#222" stroke-width="1.0" /><rect x="1130" y="539" width="182.5" height="22" fill="#686868" stroke="#222" stroke-width="1.0" /><rect x="1527" y="539" width="76" height="22" fill="#686868" stroke="#222" stroke-width="1.0" /><rect x="1228.6" y="539" width="37.0" height="183.5" fill="url(#hat)" stroke="#222" stroke-width="1.3" /><rect x="373" y="539" width="24" height="1001" fill="#686868" /><rect x="397" y="957" width="11" height="143" fill="#ffffff" stroke="#333" stroke-width="1" /><rect x="399" y="958" width="7" height="141" fill="#c0b08a" /><rect x="397" y="770" width="11" height="185" fill="#ffffff" stroke="#333" stroke-width="0.8" /><rect x="397" y="1100" width="11" height="113" fill="#ffffff" stroke="#333" stroke-width="0.8" /><rect x="373" y="712" width="178" height="36" fill="url(#hat)" stroke="#222" stroke-width="1.2" /><rect x="373" y="1298" width="173.5" height="33" fill="url(#hat)" stroke="#222" stroke-width="1.2" /><rect x="546.5" y="1298" width="23.899999999999977" height="13" fill="#686868" /><rect x="548" y="1311" width="22" height="24" fill="#dfe8f0" stroke="#333" stroke-width="0.8" /><circle cx="559" cy="1326" r="6" fill="#e88888" stroke="#d06060"/><rect x="570.4" y="1298" width="108.10000000000002" height="97.40000000000009" fill="url(#hat)" stroke="#111" stroke-width="1.6" /><rect x="580" y="1308" width="24" height="34" fill="#e4e4e4" stroke="#111" stroke-width="1.2" /><path d="M583 1311L588 1330L604 1342L583 1342Z" fill="#000"/><rect x="608" y="1308" width="61" height="34" fill="#e4e4e4" stroke="#111" stroke-width="1.2" /><path d="M611 1311L616 1330L669 1342L611 1342Z" fill="#000"/><rect x="580" y="1352" width="59" height="34" fill="#e4e4e4" stroke="#111" stroke-width="1.2" /><path d="M583 1355L588 1374L639 1386L583 1386Z" fill="#000"/><rect x="645" y="1352" width="24" height="34" fill="#e4e4e4" stroke="#111" stroke-width="1.2" /><path d="M648 1355L653 1374L669 1386L648 1386Z" fill="#000"/><rect x="669" y="1311" width="9" height="19" fill="#fff" stroke="#d33" stroke-width="1.2" /><rect x="678.5" y="1311" width="21.5" height="27" fill="#dfe8f0" stroke="#333" stroke-width="0.8" /><circle cx="690" cy="1325" r="6" fill="#e88888" stroke="#d06060"/><rect x="678.5" y="1298" width="135.5" height="13" fill="#686868" /><rect x="801" y="561" width="13" height="518" fill="#686868" /><rect x="801" y="1183" width="13" height="128" fill="#686868" /><rect x="815" y="1214" width="23" height="14" fill="url(#hat)" stroke="#222" stroke-width="1" /><path d="M814 1079 Q790 1080 773 1090 L812 1182" fill="none" stroke="#333" stroke-width="1.3"/><path d="M776 1092L812 1180L815 1176L781 1090Z" fill="#fff" stroke="#333" stroke-width="1"/><path d="M838 1213L905 1175L910 1183L844 1221Z" fill="#fff" stroke="#333" stroke-width="1"/><path d="M905 1177Q925 1195 930 1213" fill="none" stroke="#555" stroke-width="1"/><rect x="933" y="1213" width="86.39999999999998" height="16" fill="url(#hat)" stroke="#222" stroke-width="1.2" /><rect x="1001.5" y="1213" width="15.899999999999977" height="181" fill="url(#hat)" stroke="#222" stroke-width="1.2" /><rect x="1001.5" y="1394" width="53.700000000000045" height="20" fill="#686868" /><rect x="1001.5" y="1394" width="23.90000000000009" height="146" fill="#686868" /><rect x="1174.7" y="1394" width="47.799999999999955" height="28" fill="#686868" /><rect x="1198.6" y="1344.4" width="23.90000000000009" height="77.59999999999991" fill="#686868" /><rect x="1198.6" y="1344.4" width="404.4000000000001" height="23.899999999999864" fill="#686868" /><path d="M1058 1410L1125 1446" stroke="#333" stroke-width="1.3"/><path d="M1055 1414L1056 1420L1120 1452L1125 1446" fill="#fff" stroke="#333" stroke-width="1"/><path d="M1105 1475L1115 1492L1095 1492Z" fill="#000"/><rect x="1602.6" y="539" width="24.40000000000009" height="830.5" fill="url(#hat)" stroke="#111" stroke-width="1.4" /><rect x="1228.6" y="1031" width="37.200000000000045" height="178" fill="url(#hat)" stroke="#111" stroke-width="1.4" /><rect x="1228.6" y="1015.7" width="111.40000000000009" height="10.299999999999955" fill="#b9c2c0" stroke="#222" stroke-width="1.3" /><rect x="1265.8" y="1026" width="4.2000000000000455" height="318" fill="#3e3e3e" /><rect x="1254" y="1209" width="16" height="135" fill="url(#hat)" stroke="#555" stroke-width="1" /><path d="M1260 1215V1340" stroke="#6b6bd8" stroke-width="1.5" stroke-dasharray="5 3"/><rect x="1459" y="1086" width="143" height="48.700000000000045" fill="url(#hat)" stroke="#111" stroke-width="1.5" /><rect x="1465" y="1092.5" width="66" height="35.5" fill="#e6e6e6" stroke="#111" stroke-width="1.2" /><path d="M1467 1126L1529 1126L1529 1094L1520 1096L1515 1120Z" fill="#000"/><rect x="1536" y="1088" width="32" height="46" fill="#e6e6e6" stroke="#111" stroke-width="1.2" /><path d="M1538 1126L1566 1126L1566 1092L1560 1094L1556 1120Z" fill="#000"/><rect x="1568" y="1123" width="34" height="11.700000000000045" fill="#686868" /><rect x="1530.7" y="1074.5" width="71.29999999999995" height="2.5" fill="#333" /><circle cx="1584.5" cy="1085.6" r="5" fill="#f0a0a0" stroke="#d07070"/><rect x="619" y="1504" width="15.600000000000023" height="36" fill="url(#hat)" stroke="#222" stroke-width="1" /><rect x="800" y="1504" width="14" height="36" fill="url(#hat)" stroke="#222" stroke-width="1" /><path d="M399.5 561V710.5H551V748H412.5V1213" fill="none" stroke="#62b866" stroke-width="4.6"/><path d="M399.5 561V710.5H551V748H412.5V1213" fill="none" stroke="#1f5a28" stroke-width="1.1" stroke-dasharray="3 2.5" transform="translate(1.8 0)"/><path d="M816.5 562V1079" fill="none" stroke="#62b866" stroke-width="4.6"/><path d="M816.5 562V1079" fill="none" stroke="#1f5a28" stroke-width="1.1" stroke-dasharray="3 2.5" transform="translate(1.8 0)"/><path d="M816.5 1183V1210.5H1017.5V1243" fill="none" stroke="#62b866" stroke-width="4.6"/><path d="M816.5 1183V1210.5H1017.5V1243" fill="none" stroke="#1f5a28" stroke-width="1.1" stroke-dasharray="3 2.5" transform="translate(1.8 0)"/><path d="M1599.5 562V1015.7" fill="none" stroke="#62b866" stroke-width="4.6"/><path d="M1599.5 562V1015.7" fill="none" stroke="#1f5a28" stroke-width="1.1" stroke-dasharray="3 2.5" transform="translate(1.8 0)"/><path d="M400.5 1354V1540" fill="none" stroke="#62b866" stroke-width="4.6"/><path d="M400.5 1354V1540" fill="none" stroke="#1f5a28" stroke-width="1.1" stroke-dasharray="3 2.5" transform="translate(1.8 0)"/><path d="M823 594V1010" stroke="#d88a3a" stroke-width="4" stroke-dasharray="3 2"/><path d="M823 594V1010" stroke="#8a4a1a" stroke-width="1"/><path d="M1300 1174V1314.5H1573V1137" fill="none" stroke="#7a7ae6" stroke-width="2.5" stroke-dasharray="5 3"/><path d="M1260 1218V1342" stroke="#7a7ae6" stroke-width="2.5" stroke-dasharray="5 3"/><path d="M1096 1270H1206" stroke="#111" stroke-width="1.2" stroke-dasharray="5 3"/><line x1="645" y1="770" x2="645" y2="1158" stroke="#a04030" stroke-width="1.2" /><line x1="944.5" y1="650" x2="944.5" y2="1065" stroke="#a04030" stroke-width="1.2" /><line x1="1098" y1="650" x2="1098" y2="1065" stroke="#a04030" stroke-width="1.2" /><line x1="1350.5" y1="655" x2="1350.5" y2="885" stroke="#a04030" stroke-width="1.2" /><line x1="1517" y1="655" x2="1517" y2="885" stroke="#a04030" stroke-width="1.2" /><rect x="641.8" y="846" width="6.400000000000091" height="60" fill="#6a78ee" stroke="#2a2a9a" stroke-width="1" /><rect x="641.8" y="971" width="6.400000000000091" height="61" fill="#6a78ee" stroke="#2a2a9a" stroke-width="1" /><rect x="641.8" y="1094" width="6.400000000000091" height="61" fill="#6a78ee" stroke="#2a2a9a" stroke-width="1" /><rect x="941.3" y="706" width="6.400000000000091" height="58" fill="#6a78ee" stroke="#2a2a9a" stroke-width="1" /><rect x="941.3" y="953" width="6.400000000000091" height="60" fill="#6a78ee" stroke="#2a2a9a" stroke-width="1" /><rect x="1094.8" y="739" width="6.400000000000091" height="58" fill="#6a78ee" stroke="#2a2a9a" stroke-width="1" /><rect x="1094.8" y="896" width="6.400000000000091" height="59" fill="#6a78ee" stroke="#2a2a9a" stroke-width="1" /><rect x="1347.3" y="665" width="6.400000000000091" height="62" fill="#6a78ee" stroke="#2a2a9a" stroke-width="1" /><rect x="1347.3" y="817" width="6.400000000000091" height="58" fill="#6a78ee" stroke="#2a2a9a" stroke-width="1" /><rect x="1513.8" y="665" width="6.400000000000091" height="62" fill="#6a78ee" stroke="#2a2a9a" stroke-width="1" /><rect x="1513.8" y="817" width="6.400000000000091" height="58" fill="#6a78ee" stroke="#2a2a9a" stroke-width="1" /><line x1="395" y1="621.8" x2="801" y2="621.8" stroke="#151515" stroke-width="1.25" /><line x1="390.7" y1="561" x2="390.7" y2="748" stroke="#151515" stroke-width="1.25" /><line x1="446.7" y1="561" x2="446.7" y2="748" stroke="#151515" stroke-width="1.25" /><line x1="397" y1="726" x2="549" y2="726" stroke="#151515" stroke-width="1.25" /><line x1="565.7" y1="710.6" x2="565.7" y2="749" stroke="#151515" stroke-width="1.25" /><line x1="409.7" y1="764.7" x2="547.7" y2="764.7" stroke="#151515" stroke-width="1.25" /><line x1="432.5" y1="746" x2="432.5" y2="821.6" stroke="#151515" stroke-width="1.25" /><line x1="441.6" y1="746" x2="441.6" y2="1302" stroke="#151515" stroke-width="1.25" /><line x1="631.7" y1="747.6" x2="631.7" y2="1302" stroke="#151515" stroke-width="1.25" /><line x1="643" y1="787.4" x2="802.4" y2="787.4" stroke="#151515" stroke-width="1.25" /><line x1="643" y1="1178.8" x2="802.4" y2="1178.8" stroke="#151515" stroke-width="1.25" /><line x1="839.4" y1="561" x2="839.4" y2="1213" stroke="#151515" stroke-width="1.25" /><line x1="812.4" y1="645.7" x2="1233" y2="645.7" stroke="#151515" stroke-width="1.25" /><line x1="812.4" y1="1036.5" x2="1232.5" y2="1036.5" stroke="#151515" stroke-width="1.25" /><line x1="935.5" y1="561" x2="935.5" y2="1215" stroke="#151515" stroke-width="1.25" /><line x1="1087" y1="561" x2="1087" y2="1055.7" stroke="#151515" stroke-width="1.25" /><line x1="1336.7" y1="561" x2="1336.7" y2="949" stroke="#151515" stroke-width="1.25" /><line x1="1419.4" y1="561" x2="1419.4" y2="700" stroke="#151515" stroke-width="1.25" /><line x1="1454.6" y1="561" x2="1454.6" y2="705" stroke="#151515" stroke-width="1.25" /><line x1="1530.3" y1="561" x2="1530.3" y2="949" stroke="#151515" stroke-width="1.25" /><line x1="1589.6" y1="561" x2="1589.6" y2="1015.7" stroke="#151515" stroke-width="1.25" /><line x1="1350" y1="659.4" x2="1605" y2="659.4" stroke="#151515" stroke-width="1.25" /><line x1="1432.7" y1="688.4" x2="1605" y2="688.4" stroke="#151515" stroke-width="1.25" /><line x1="1468" y1="699.8" x2="1605" y2="699.8" stroke="#151515" stroke-width="1.25" /><line x1="1400" y1="854.3" x2="1602" y2="854.3" stroke="#151515" stroke-width="1.25" /><line x1="1346" y1="930.4" x2="1607.5" y2="930.4" stroke="#151515" stroke-width="1.25" /><line x1="1468" y1="614" x2="1468" y2="699" stroke="#151515" stroke-width="1.25" /><line x1="880" y1="1197" x2="1017.4" y2="1197" stroke="#151515" stroke-width="1.25" /><line x1="1034.5" y1="1211" x2="1034.5" y2="1250.8" stroke="#151515" stroke-width="1.25" /><line x1="1017.4" y1="1303.4" x2="1198.6" y2="1303.4" stroke="#151515" stroke-width="1.25" /><line x1="1088" y1="1276.7" x2="1088" y2="1394" stroke="#151515" stroke-width="1.25" /><line x1="1245.6" y1="1207" x2="1245.6" y2="1344.4" stroke="#151515" stroke-width="1.25" /><line x1="1352" y1="1215" x2="1605" y2="1215" stroke="#151515" stroke-width="1.25" /><line x1="1353" y1="1215" x2="1353" y2="1344" stroke="#151515" stroke-width="1.25" /><line x1="1493.7" y1="1215" x2="1493.7" y2="1344" stroke="#151515" stroke-width="1.25" /><line x1="884" y1="1276.7" x2="1001.5" y2="1276.7" stroke="#151515" stroke-width="1.25" /><line x1="969.6" y1="1226" x2="969.6" y2="1537" stroke="#151515" stroke-width="1.25" /><line x1="981.5" y1="1226" x2="981.5" y2="1345" stroke="#151515" stroke-width="1.25" /><line x1="965.6" y1="1297.4" x2="987.5" y2="1297.4" stroke="#151515" stroke-width="1.25" /><line x1="880" y1="1499.7" x2="1007.4" y2="1499.7" stroke="#151515" stroke-width="1.25" /><line x1="811.7" y1="1276.3" x2="884" y2="1276.3" stroke="#151515" stroke-width="1.25" /><line x1="869.3" y1="1260" x2="869.3" y2="1537" stroke="#151515" stroke-width="1.25" /><line x1="395.4" y1="1466" x2="573.7" y2="1466" stroke="#151515" stroke-width="1.25" /><line x1="387.4" y1="1354" x2="387.4" y2="1537" stroke="#151515" stroke-width="1.25" /><path d="M390 626.8L400 616.8M395 613.8V629.8M387 621.8H403" stroke="#111" stroke-width="1.1"/><path d="M429 626.8L439 616.8M434 613.8V629.8M426 621.8H442" stroke="#111" stroke-width="1.1"/><path d="M582 626.8L592 616.8M587 613.8V629.8M579 621.8H595" stroke="#111" stroke-width="1.1"/><path d="M605 626.8L615 616.8M610 613.8V629.8M602 621.8H618" stroke="#111" stroke-width="1.1"/><path d="M796 626.8L806 616.8M801 613.8V629.8M793 621.8H809" stroke="#111" stroke-width="1.1"/><path d="M392 731L402 721M397 718V734M389 726H405" stroke="#111" stroke-width="1.1"/><path d="M544 731L554 721M549 718V734M541 726H557" stroke="#111" stroke-width="1.1"/><path d="M560.7 715.6L570.7 705.6M565.7 702.6V718.6M557.7 710.6H573.7" stroke="#111" stroke-width="1.1"/><path d="M560.7 754L570.7 744M565.7 741V757M557.7 749H573.7" stroke="#111" stroke-width="1.1"/><path d="M404.7 769.7L414.7 759.7M409.7 756.7V772.7M401.7 764.7H417.7" stroke="#111" stroke-width="1.1"/><path d="M542.7 769.7L552.7 759.7M547.7 756.7V772.7M539.7 764.7H555.7" stroke="#111" stroke-width="1.1"/><path d="M638 792.4L648 782.4M643 779.4V795.4M635 787.4H651" stroke="#111" stroke-width="1.1"/><path d="M797.4 792.4L807.4 782.4M802.4 779.4V795.4M794.4 787.4H810.4" stroke="#111" stroke-width="1.1"/><path d="M638 1183.8L648 1173.8M643 1170.8V1186.8M635 1178.8H651" stroke="#111" stroke-width="1.1"/><path d="M797.4 1183.8L807.4 1173.8M802.4 1170.8V1186.8M794.4 1178.8H810.4" stroke="#111" stroke-width="1.1"/><path d="M807.4 650.7L817.4 640.7M812.4 637.7V653.7M804.4 645.7H820.4" stroke="#111" stroke-width="1.1"/><path d="M930.5 650.7L940.5 640.7M935.5 637.7V653.7M927.5 645.7H943.5" stroke="#111" stroke-width="1.1"/><path d="M1082 650.7L1092 640.7M1087 637.7V653.7M1079 645.7H1095" stroke="#111" stroke-width="1.1"/><path d="M1228 650.7L1238 640.7M1233 637.7V653.7M1225 645.7H1241" stroke="#111" stroke-width="1.1"/><path d="M807.4 1041.5L817.4 1031.5M812.4 1028.5V1044.5M804.4 1036.5H820.4" stroke="#111" stroke-width="1.1"/><path d="M930.5 1041.5L940.5 1031.5M935.5 1028.5V1044.5M927.5 1036.5H943.5" stroke="#111" stroke-width="1.1"/><path d="M1082 1041.5L1092 1031.5M1087 1028.5V1044.5M1079 1036.5H1095" stroke="#111" stroke-width="1.1"/><path d="M1227.5 1041.5L1237.5 1031.5M1232.5 1028.5V1044.5M1224.5 1036.5H1240.5" stroke="#111" stroke-width="1.1"/><path d="M1345.3 664.4L1355.3 654.4M1350.3 651.4V667.4M1342.3 659.4H1358.3" stroke="#111" stroke-width="1.1"/><path d="M1511.8 664.4L1521.8 654.4M1516.8 651.4V667.4M1508.8 659.4H1524.8" stroke="#111" stroke-width="1.1"/><path d="M1597.5 664.4L1607.5 654.4M1602.5 651.4V667.4M1594.5 659.4H1610.5" stroke="#111" stroke-width="1.1"/><path d="M1427.7 693.4L1437.7 683.4M1432.7 680.4V696.4M1424.7 688.4H1440.7" stroke="#111" stroke-width="1.1"/><path d="M1600 693.4L1610 683.4M1605 680.4V696.4M1597 688.4H1613" stroke="#111" stroke-width="1.1"/><path d="M1600 704.8L1610 694.8M1605 691.8V707.8M1597 699.8H1613" stroke="#111" stroke-width="1.1"/><path d="M1341 935.4L1351 925.4M1346 922.4V938.4M1338 930.4H1354" stroke="#111" stroke-width="1.1"/><path d="M1525.3 935.4L1535.3 925.4M1530.3 922.4V938.4M1522.3 930.4H1538.3" stroke="#111" stroke-width="1.1"/><path d="M1602.5 935.4L1612.5 925.4M1607.5 922.4V938.4M1599.5 930.4H1615.5" stroke="#111" stroke-width="1.1"/><path d="M930.5 1220L940.5 1210M935.5 1207V1223M927.5 1215H943.5" stroke="#111" stroke-width="1.1"/><path d="M1331.7 954L1341.7 944M1336.7 941V957M1328.7 949H1344.7" stroke="#111" stroke-width="1.1"/><path d="M1525.3 954L1535.3 944M1530.3 941V957M1522.3 949H1538.3" stroke="#111" stroke-width="1.1"/><path d="M1012.4 1202L1022.4 1192M1017.4 1189V1205M1009.4 1197H1025.4" stroke="#111" stroke-width="1.1"/><path d="M1029.5 1216L1039.5 1206M1034.5 1203V1219M1026.5 1211H1042.5" stroke="#111" stroke-width="1.1"/><path d="M1029.5 1255.8L1039.5 1245.8M1034.5 1242.8V1258.8M1026.5 1250.8H1042.5" stroke="#111" stroke-width="1.1"/><path d="M1012.4 1308.4L1022.4 1298.4M1017.4 1295.4V1311.4M1009.4 1303.4H1025.4" stroke="#111" stroke-width="1.1"/><path d="M1193.6 1308.4L1203.6 1298.4M1198.6 1295.4V1311.4M1190.6 1303.4H1206.6" stroke="#111" stroke-width="1.1"/><path d="M1083 1281.7L1093 1271.7M1088 1268.7V1284.7M1080 1276.7H1096" stroke="#111" stroke-width="1.1"/><path d="M1083 1399L1093 1389M1088 1386V1402M1080 1394H1096" stroke="#111" stroke-width="1.1"/><path d="M1240.6 1212L1250.6 1202M1245.6 1199V1215M1237.6 1207H1253.6" stroke="#111" stroke-width="1.1"/><path d="M1240.6 1349.4L1250.6 1339.4M1245.6 1336.4V1352.4M1237.6 1344.4H1253.6" stroke="#111" stroke-width="1.1"/><path d="M1347 1220L1357 1210M1352 1207V1223M1344 1215H1360" stroke="#111" stroke-width="1.1"/><path d="M1370.8 1220L1380.8 1210M1375.8 1207V1223M1367.8 1215H1383.8" stroke="#111" stroke-width="1.1"/><path d="M1474 1220L1484 1210M1479 1207V1223M1471 1215H1487" stroke="#111" stroke-width="1.1"/><path d="M1497.8 1220L1507.8 1210M1502.8 1207V1223M1494.8 1215H1510.8" stroke="#111" stroke-width="1.1"/><path d="M1600 1220L1610 1210M1605 1207V1223M1597 1215H1613" stroke="#111" stroke-width="1.1"/><path d="M390.4 1471L400.4 1461M395.4 1458V1474M387.4 1466H403.4" stroke="#111" stroke-width="1.1"/><path d="M455.2 1471L465.2 1461M460.2 1458V1474M452.2 1466H468.2" stroke="#111" stroke-width="1.1"/><path d="M479 1471L489 1461M484 1458V1474M476 1466H492" stroke="#111" stroke-width="1.1"/><path d="M503 1471L513 1461M508 1458V1474M500 1466H516" stroke="#111" stroke-width="1.1"/><path d="M568.7 1471L578.7 1461M573.7 1458V1474M565.7 1466H581.7" stroke="#111" stroke-width="1.1"/><path d="M382.4 1359L392.4 1349M387.4 1346V1362M379.4 1354H395.4" stroke="#111" stroke-width="1.1"/><path d="M879 1281.7L889 1271.7M884 1268.7V1284.7M876 1276.7H892" stroke="#111" stroke-width="1.1"/><path d="M996.5 1281.7L1006.5 1271.7M1001.5 1268.7V1284.7M993.5 1276.7H1009.5" stroke="#111" stroke-width="1.1"/><path d="M864.3 1303L874.3 1293M869.3 1290V1306M861.3 1298H877.3" stroke="#111" stroke-width="1.1"/><path d="M864.3 1381L874.3 1371M869.3 1368V1384M861.3 1376H877.3" stroke="#111" stroke-width="1.1"/><path d="M864.3 1405L874.3 1395M869.3 1392V1408M861.3 1400H877.3" stroke="#111" stroke-width="1.1"/><path d="M864.3 1482L874.3 1472M869.3 1469V1485M861.3 1477H877.3" stroke="#111" stroke-width="1.1"/><path d="M864.3 1506L874.3 1496M869.3 1493V1509M861.3 1501H877.3" stroke="#111" stroke-width="1.1"/><path d="M931 566L941 556M936 553V569M928 561H944" stroke="#111" stroke-width="1.1"/><path d="M1082 566L1092 556M1087 553V569M1079 561H1095" stroke="#111" stroke-width="1.1"/><path d="M1332 566L1342 556M1337 553V569M1329 561H1345" stroke="#111" stroke-width="1.1"/><path d="M1414 566L1424 556M1419 553V569M1411 561H1427" stroke="#111" stroke-width="1.1"/><path d="M1449.6 566L1459.6 556M1454.6 553V569M1446.6 561H1462.6" stroke="#111" stroke-width="1.1"/><path d="M1525 566L1535 556M1530 553V569M1522 561H1538" stroke="#111" stroke-width="1.1"/><path d="M1585 566L1595 556M1590 553V569M1582 561H1598" stroke="#111" stroke-width="1.1"/><path d="M931 633L941 623M936 620V636M928 628H944" stroke="#111" stroke-width="1.1"/><path d="M1082 633L1092 623M1087 620V636M1079 628H1095" stroke="#111" stroke-width="1.1"/><path d="M1332 633L1342 623M1337 620V636M1329 628H1345" stroke="#111" stroke-width="1.1"/><path d="M1525 633L1535 623M1530 620V636M1522 628H1538" stroke="#111" stroke-width="1.1"/><line x1="434" y1="520" x2="670" y2="520" stroke="#151515" stroke-width="1.1" /><line x1="434" y1="520" x2="434" y2="577" stroke="#151515" stroke-width="1.1" /><line x1="586" y1="609" x2="721" y2="609" stroke="#151515" stroke-width="1.1" /><line x1="586" y1="609" x2="586" y2="636" stroke="#151515" stroke-width="1.1" /><line x1="610" y1="656" x2="667" y2="656" stroke="#151515" stroke-width="1.1" /><line x1="449" y1="659.4" x2="504.5" y2="659.4" stroke="#151515" stroke-width="1.1" /><line x1="449" y1="659.4" x2="434" y2="690" stroke="#151515" stroke-width="1.1" /><line x1="490" y1="692" x2="630" y2="692" stroke="#151515" stroke-width="1.1" /><line x1="490" y1="692" x2="490" y2="712" stroke="#151515" stroke-width="1.1" /><line x1="434" y1="817" x2="530.7" y2="817" stroke="#151515" stroke-width="1.1" /><line x1="945.5" y1="817.3" x2="1019.4" y2="817.3" stroke="#151515" stroke-width="1.1" /><line x1="1100.5" y1="783" x2="1264" y2="783" stroke="#151515" stroke-width="1.1" /><line x1="1204" y1="845" x2="1408" y2="845" stroke="#151515" stroke-width="1.1" /><line x1="1344" y1="614" x2="1468" y2="614" stroke="#151515" stroke-width="1.1" /><line x1="1368" y1="705.5" x2="1426" y2="705.5" stroke="#151515" stroke-width="1.1" /><line x1="1368" y1="732" x2="1410" y2="732" stroke="#151515" stroke-width="1.1" /><line x1="1410" y1="732" x2="1468" y2="713" stroke="#151515" stroke-width="1.1" /><line x1="1481" y1="719" x2="1411" y2="870" stroke="#151515" stroke-width="1.1" /><line x1="1350" y1="903" x2="1416.8" y2="903" stroke="#151515" stroke-width="1.1" /><line x1="1447.5" y1="903" x2="1516.6" y2="903" stroke="#151515" stroke-width="1.1" /><line x1="1451.3" y1="974" x2="1602.4" y2="974" stroke="#151515" stroke-width="1.1" /><line x1="1425.7" y1="1025.4" x2="1532" y2="1025.4" stroke="#151515" stroke-width="1.1" /><line x1="1531.5" y1="1025.4" x2="1531.5" y2="1043.8" stroke="#151515" stroke-width="1.1" /><line x1="1532" y1="1025.4" x2="1600" y2="1042.5" stroke="#151515" stroke-width="1.1" /><line x1="1099" y1="1013" x2="1174" y2="1013" stroke="#151515" stroke-width="1.1" /><line x1="1067" y1="1090.7" x2="1214.5" y2="1090.7" stroke="#151515" stroke-width="1.1" /><line x1="1213.7" y1="1029.8" x2="1213.7" y2="1090.7" stroke="#151515" stroke-width="1.1" /><line x1="1027" y1="1262" x2="1186.6" y2="1262" stroke="#151515" stroke-width="1.1" /><line x1="1103" y1="1279.5" x2="1178.7" y2="1279.5" stroke="#151515" stroke-width="1.1" /><line x1="1127" y1="1227" x2="1254.4" y2="1227" stroke="#151515" stroke-width="1.1" /><line x1="1326" y1="1160.4" x2="1431.6" y2="1160.4" stroke="#151515" stroke-width="1.1" /><line x1="1326" y1="1160.4" x2="1302" y2="1199" stroke="#151515" stroke-width="1.1" /><line x1="1375.8" y1="1191" x2="1431.6" y2="1191" stroke="#151515" stroke-width="1.1" /><line x1="1375.8" y1="1191" x2="1375.8" y2="1230" stroke="#151515" stroke-width="1.1" /><line x1="1450" y1="1184" x2="1585" y2="1184" stroke="#151515" stroke-width="1.1" /><line x1="1479.7" y1="1231" x2="1479.7" y2="1272.7" stroke="#151515" stroke-width="1.1" /><line x1="1390" y1="1272.7" x2="1479.7" y2="1272.7" stroke="#151515" stroke-width="1.1" /><line x1="888" y1="1345" x2="991.5" y2="1345" stroke="#151515" stroke-width="1.1" /><line x1="999.5" y1="1449" x2="1174.7" y2="1449" stroke="#151515" stroke-width="1.1" /><line x1="884" y1="1477.8" x2="959.6" y2="1477.8" stroke="#151515" stroke-width="1.1" /><line x1="682.4" y1="1376.5" x2="883.5" y2="1376.5" stroke="#151515" stroke-width="1.1" /><line x1="483.5" y1="1427.4" x2="541" y2="1427.4" stroke="#151515" stroke-width="1.1" /><line x1="483.5" y1="1427.4" x2="483.5" y2="1444" stroke="#151515" stroke-width="1.1" /><line x1="412.6" y1="961.7" x2="549" y2="961.7" stroke="#151515" stroke-width="1.1" /><line x1="482.3" y1="1027" x2="644.5" y2="1027" stroke="#151515" stroke-width="1.1" /><line x1="647" y1="1122" x2="720.8" y2="1122" stroke="#151515" stroke-width="1.1" /><line x1="414" y1="1192" x2="576.2" y2="1192" stroke="#151515" stroke-width="1.1" /><line x1="888" y1="976" x2="944" y2="976" stroke="#151515" stroke-width="1.1" /><line x1="880" y1="1097" x2="940" y2="1097" stroke="#151515" stroke-width="1.1" /><circle cx="434" cy="577" r="2.8" fill="#111"/><circle cx="1100.5" cy="783" r="2.8" fill="#111"/><circle cx="1408" cy="845" r="2.8" fill="#111"/><circle cx="1099" cy="1013" r="2.8" fill="#111"/><path d="M1227 845V862M1221 866Q1233 852 1245 866" fill="none" stroke="#222" stroke-width="1.3"/><circle cx="587" cy="636.6" r="6.5" fill="none" stroke="#3a3ad0" stroke-width="1.6"/><circle cx="587" cy="636.6" r="2.2" fill="#3a3ad0"/><circle cx="610" cy="636.6" r="6.5" fill="none" stroke="#3a3ad0" stroke-width="1.6"/><circle cx="610" cy="636.6" r="2.2" fill="#3a3ad0"/><circle cx="1352" cy="1230" r="6.5" fill="none" stroke="#3a3ad0" stroke-width="1.6"/><circle cx="1352" cy="1230" r="2.2" fill="#3a3ad0"/><circle cx="1375.8" cy="1230" r="6.5" fill="none" stroke="#3a3ad0" stroke-width="1.6"/><circle cx="1375.8" cy="1230" r="2.2" fill="#3a3ad0"/><circle cx="1479" cy="1231" r="6.5" fill="none" stroke="#3a3ad0" stroke-width="1.6"/><circle cx="1479" cy="1231" r="2.2" fill="#3a3ad0"/><circle cx="1502.8" cy="1231" r="6.5" fill="none" stroke="#3a3ad0" stroke-width="1.6"/><circle cx="1502.8" cy="1231" r="2.2" fill="#3a3ad0"/><circle cx="1103" cy="1279.5" r="6.5" fill="none" stroke="#3a3ad0" stroke-width="1.6"/><circle cx="1103" cy="1279.5" r="2.2" fill="#3a3ad0"/><circle cx="1103" cy="1303.4" r="6.5" fill="none" stroke="#3a3ad0" stroke-width="1.6"/><circle cx="1103" cy="1303.4" r="2.2" fill="#3a3ad0"/><circle cx="1103" cy="1327.3" r="6.5" fill="none" stroke="#3a3ad0" stroke-width="1.6"/><circle cx="1103" cy="1327.3" r="2.2" fill="#3a3ad0"/><circle cx="587" cy="636.6" r="3" fill="#000"/><circle cx="1479" cy="1231" r="3" fill="#000"/><circle cx="884.6" cy="1276" r="6.5" fill="none" stroke="#3aa84a" stroke-width="1.6"/><circle cx="884.6" cy="1276" r="2.2" fill="#3aa84a"/><circle cx="884.6" cy="1299" r="6.5" fill="none" stroke="#3aa84a" stroke-width="1.6"/><circle cx="884.6" cy="1299" r="2.2" fill="#3aa84a"/><circle cx="884.6" cy="1377" r="6.5" fill="none" stroke="#3aa84a" stroke-width="1.6"/><circle cx="884.6" cy="1377" r="2.2" fill="#3aa84a"/><circle cx="884.6" cy="1400.4" r="6.5" fill="none" stroke="#3aa84a" stroke-width="1.6"/><circle cx="884.6" cy="1400.4" r="2.2" fill="#3aa84a"/><circle cx="884.6" cy="1477.4" r="6.5" fill="none" stroke="#3aa84a" stroke-width="1.6"/><circle cx="884.6" cy="1477.4" r="2.2" fill="#3aa84a"/><circle cx="884.6" cy="1500.9" r="6.5" fill="none" stroke="#3aa84a" stroke-width="1.6"/><circle cx="884.6" cy="1500.9" r="2.2" fill="#3aa84a"/><circle cx="460.2" cy="1448.3" r="6.5" fill="none" stroke="#3aa84a" stroke-width="1.6"/><circle cx="460.2" cy="1448.3" r="2.2" fill="#3aa84a"/><circle cx="484" cy="1448.3" r="6.5" fill="none" stroke="#3aa84a" stroke-width="1.6"/><circle cx="484" cy="1448.3" r="2.2" fill="#3aa84a"/><circle cx="508" cy="1448.3" r="6.5" fill="none" stroke="#3aa84a" stroke-width="1.6"/><circle cx="508" cy="1448.3" r="2.2" fill="#3aa84a"/><circle cx="433.3" cy="696.4" r="7" fill="none" stroke="#d05050" stroke-width="1.6"/><circle cx="433.3" cy="696.4" r="2.8" fill="#111"/><circle cx="1433.5" cy="704.3" r="7" fill="none" stroke="#d05050" stroke-width="1.6"/><circle cx="1433.5" cy="704.3" r="2.8" fill="#111"/><circle cx="1468" cy="713" r="7" fill="none" stroke="#d05050" stroke-width="1.6"/><circle cx="1468" cy="713" r="2.8" fill="#111"/><path d="M414 808A10 10 0 0 1 414 828" fill="none" stroke="#c04040" stroke-width="1.6"/><path d="M1212 1021A9 9 0 0 0 1206 1037" fill="none" stroke="#4a4ad8" stroke-width="1.6"/><circle cx="1213.7" cy="1029.8" r="2.8" fill="#111"/><path d="M884.6 1270V1510" stroke="#222" stroke-width="1.2" stroke-dasharray="4 3"/><path d="M1375.8 1230H1500" stroke="#222" stroke-width="1.3" stroke-dasharray="5 3"/><path d="M433 580V690" stroke="#555" stroke-width="1" stroke-dasharray="4 3"/><path d="M1419.4 700V840M1454.6 705V860M1440 750L1400 860" stroke="#444" stroke-width="1" stroke-dasharray="4 3"/><path d="M1103 1474L1115 1494H1091Z" fill="#000"/><text x="553.5" y="505.5" font-size="10.5" fill="#3434cc" text-anchor="middle" font-style="italic" textLength="202" lengthAdjust="spacingAndGlyphs">Підвісний світильник на замовлення LIGHT24,</text><text x="553.5" y="515.5" font-size="10.5" fill="#3434cc" text-anchor="middle" font-style="italic" textLength="85" lengthAdjust="spacingAndGlyphs">колір світла 3000K</text><text x="654.5" y="597" font-size="10.5" fill="#3434cc" text-anchor="middle" font-style="italic" textLength="75" lengthAdjust="spacingAndGlyphs">Гіпсовий врізний</text><text x="654.5" y="607" font-size="10.5" fill="#3434cc" text-anchor="middle" font-style="italic" textLength="108" lengthAdjust="spacingAndGlyphs">світильник AGARA CB 005</text><text x="641.6" y="652.5" font-size="10.5" fill="#222" text-anchor="middle" font-style="italic" textLength="28" lengthAdjust="spacingAndGlyphs">гр. 11</text><text x="639" y="665" font-size="10.5" fill="#3434cc" text-anchor="middle" font-style="italic" textLength="47" lengthAdjust="spacingAndGlyphs">h-2 690 мм</text><text x="480" y="657" font-size="10.5" fill="#222" text-anchor="middle" font-style="italic" textLength="28" lengthAdjust="spacingAndGlyphs">гр. 12</text><text x="480" y="670" font-size="10.5" fill="#3434cc" text-anchor="middle" font-style="italic" textLength="47" lengthAdjust="spacingAndGlyphs">h-2 690 мм</text><text x="563.4" y="680" font-size="10.5" fill="#222" text-anchor="middle" font-style="italic" textLength="28" lengthAdjust="spacingAndGlyphs">гр. 15</text><text x="563.4" y="690" font-size="10.5" fill="#222" text-anchor="middle" font-style="italic" textLength="108" lengthAdjust="spacingAndGlyphs">LED-підсвітка стелі RGB</text><text x="559" y="701" font-size="10.5" fill="#3434cc" text-anchor="middle" font-style="italic" textLength="47" lengthAdjust="spacingAndGlyphs">h-2 690 мм</text><text x="486.6" y="795" font-size="10.5" fill="#222" text-anchor="middle" font-style="italic" textLength="56" lengthAdjust="spacingAndGlyphs">Бра (Вимикач</text><text x="486.6" y="805" font-size="10.5" fill="#222" text-anchor="middle" font-style="italic" textLength="66" lengthAdjust="spacingAndGlyphs">знаходиться на</text><text x="486.6" y="815" font-size="10.5" fill="#222" text-anchor="middle" font-style="italic" textLength="42" lengthAdjust="spacingAndGlyphs">пристрої)</text><text x="486.6" y="827.5" font-size="10.5" fill="#3434cc" text-anchor="middle" font-style="italic" textLength="38" lengthAdjust="spacingAndGlyphs">h-900 мм</text><text x="498" y="940" font-size="10.5" fill="#222" text-anchor="middle" font-style="italic" textLength="28" lengthAdjust="spacingAndGlyphs">гр. 14</text><text x="496" y="950" font-size="10.5" fill="#222" text-anchor="middle" font-style="italic" textLength="80" lengthAdjust="spacingAndGlyphs">RGB LED-підсвітка</text><text x="496.5" y="959.5" font-size="10.5" fill="#222" text-anchor="middle" font-style="italic" textLength="70" lengthAdjust="spacingAndGlyphs">скельної панелі</text><text x="557.7" y="1005" font-size="10.5" fill="#3434cc" text-anchor="middle" font-style="italic" textLength="132" lengthAdjust="spacingAndGlyphs">Світильник лінійник 24 W 30o</text><text x="557.7" y="1014.5" font-size="10.5" fill="#3434cc" text-anchor="middle" font-style="italic" textLength="99" lengthAdjust="spacingAndGlyphs">3000K 220mm Osram3030</text><text x="557.7" y="1024" font-size="10.5" fill="#3434cc" text-anchor="middle" font-style="italic" textLength="122" lengthAdjust="spacingAndGlyphs">1920LM, Чорний мат, 48V DC</text><text x="695" y="1119" font-size="10.5" fill="#222" text-anchor="middle" font-style="italic" textLength="28" lengthAdjust="spacingAndGlyphs">гр. 10</text><text x="690.6" y="1131" font-size="10.5" fill="#3434cc" text-anchor="middle" font-style="italic" textLength="47" lengthAdjust="spacingAndGlyphs">h-2 690 мм</text><text x="508" y="1179" font-size="10.5" fill="#222" text-anchor="middle" font-style="italic" textLength="28" lengthAdjust="spacingAndGlyphs">гр. 13</text><text x="509.3" y="1189" font-size="10.5" fill="#222" text-anchor="middle" font-style="italic" textLength="108" lengthAdjust="spacingAndGlyphs">RGB LED-підсвітка стелі</text><text x="506.5" y="1203" font-size="10.5" fill="#3434cc" text-anchor="middle" font-style="italic" textLength="47" lengthAdjust="spacingAndGlyphs">h-2 690 мм</text><text x="994" y="815" font-size="10.5" fill="#222" text-anchor="middle" font-style="italic" textLength="24" lengthAdjust="spacingAndGlyphs">гр. 4</text><text x="991" y="827.5" font-size="10.5" fill="#3434cc" text-anchor="middle" font-style="italic" textLength="47" lengthAdjust="spacingAndGlyphs">h-2 690 мм</text><text x="1190" y="761.5" font-size="10.5" fill="#3434cc" text-anchor="middle" font-style="italic" textLength="132" lengthAdjust="spacingAndGlyphs">Світильник лінійник 24 W 30o</text><text x="1190" y="770.5" font-size="10.5" fill="#3434cc" text-anchor="middle" font-style="italic" textLength="99" lengthAdjust="spacingAndGlyphs">3000K 220mm Osram3030</text><text x="1190" y="780.5" font-size="10.5" fill="#3434cc" text-anchor="middle" font-style="italic" textLength="122" lengthAdjust="spacingAndGlyphs">1920LM, Чорний мат. 48V DC</text><text x="1270" y="823" font-size="10.5" fill="#3434cc" text-anchor="middle" font-style="italic" textLength="94" lengthAdjust="spacingAndGlyphs">Підвісні світильники</text><text x="1269" y="833" font-size="10.5" fill="#3434cc" text-anchor="middle" font-style="italic" textLength="103" lengthAdjust="spacingAndGlyphs">на замовлення LIGHT24,</text><text x="1270" y="843" font-size="10.5" fill="#3434cc" text-anchor="middle" font-style="italic" textLength="85" lengthAdjust="spacingAndGlyphs">колір світла 3000K</text><text x="1398" y="592.6" font-size="10.5" fill="#b03a2a" text-anchor="middle" font-style="italic" textLength="85" lengthAdjust="spacingAndGlyphs">Розміщення виводів</text><text x="1398" y="602" font-size="10.5" fill="#b03a2a" text-anchor="middle" font-style="italic" textLength="80" lengthAdjust="spacingAndGlyphs">уточнити на місці</text><text x="1398" y="611" font-size="10.5" fill="#b03a2a" text-anchor="middle" font-style="italic" textLength="94" lengthAdjust="spacingAndGlyphs">перед монтажем стелі</text><text x="1392" y="703.6" font-size="10.5" fill="#222" text-anchor="middle" font-style="italic" textLength="24" lengthAdjust="spacingAndGlyphs">гр. 7</text><text x="1392" y="716" font-size="10.5" fill="#3434cc" text-anchor="middle" font-style="italic" textLength="47" lengthAdjust="spacingAndGlyphs">h-2 690 мм</text><text x="1392" y="729.8" font-size="10.5" fill="#222" text-anchor="middle" font-style="italic" textLength="24" lengthAdjust="spacingAndGlyphs">гр. 7</text><text x="1392" y="742" font-size="10.5" fill="#3434cc" text-anchor="middle" font-style="italic" textLength="47" lengthAdjust="spacingAndGlyphs">h-2 690 мм</text><text x="1392.5" y="901" font-size="10.5" fill="#222" text-anchor="middle" font-style="italic" textLength="24" lengthAdjust="spacingAndGlyphs">гр. 6</text><text x="1390" y="913" font-size="10.5" fill="#3434cc" text-anchor="middle" font-style="italic" textLength="47" lengthAdjust="spacingAndGlyphs">h-2 690 мм</text><text x="1474.4" y="901" font-size="10.5" fill="#222" text-anchor="middle" font-style="italic" textLength="24" lengthAdjust="spacingAndGlyphs">гр. 6</text><text x="1475.7" y="913" font-size="10.5" fill="#3434cc" text-anchor="middle" font-style="italic" textLength="47" lengthAdjust="spacingAndGlyphs">h-2 690 мм</text><text x="1519" y="961.8" font-size="10.5" fill="#222" text-anchor="middle" font-style="italic" textLength="24" lengthAdjust="spacingAndGlyphs">гр. 8</text><text x="1516.6" y="971.8" font-size="10.5" fill="#222" text-anchor="middle" font-style="italic" textLength="108" lengthAdjust="spacingAndGlyphs">RGB LED-підсвітка стелі</text><text x="1518" y="984.6" font-size="10.5" fill="#3434cc" text-anchor="middle" font-style="italic" textLength="47" lengthAdjust="spacingAndGlyphs">h-2 690 мм</text><text x="1478" y="993" font-size="10.5" fill="#222" text-anchor="middle" font-style="italic" textLength="24" lengthAdjust="spacingAndGlyphs">гр. 9</text><text x="1477" y="1003.3" font-size="10.5" fill="#222" text-anchor="middle" font-style="italic" textLength="61" lengthAdjust="spacingAndGlyphs">LED-підсвітка</text><text x="1477" y="1013.5" font-size="10.5" fill="#222" text-anchor="middle" font-style="italic" textLength="70" lengthAdjust="spacingAndGlyphs">пеналу-вітрини,</text><text x="1477" y="1023.3" font-size="10.5" fill="#222" text-anchor="middle" font-style="italic" textLength="85" lengthAdjust="spacingAndGlyphs">колір світла 3000K</text><text x="1474.4" y="1034.8" font-size="10.5" fill="#3434cc" text-anchor="middle" font-style="italic" textLength="70" lengthAdjust="spacingAndGlyphs">Висоту уточнити</text><text x="1474.4" y="1044.8" font-size="10.5" fill="#3434cc" text-anchor="middle" font-style="italic" textLength="38" lengthAdjust="spacingAndGlyphs">на місці</text><text x="1138.9" y="1068.6" font-size="10.5" fill="#222" text-anchor="middle" font-style="italic" textLength="113" lengthAdjust="spacingAndGlyphs">Лампа настільна (Вимикач</text><text x="1138.9" y="1078.6" font-size="10.5" fill="#222" text-anchor="middle" font-style="italic" textLength="66" lengthAdjust="spacingAndGlyphs">знаходиться на</text><text x="1138.9" y="1088.5" font-size="10.5" fill="#222" text-anchor="middle" font-style="italic" textLength="42" lengthAdjust="spacingAndGlyphs">пристрої)</text><text x="1148.8" y="1010.9" font-size="10.5" fill="#222" text-anchor="middle" font-style="italic" textLength="24" lengthAdjust="spacingAndGlyphs">гр. 4</text><text x="1146" y="1022.8" font-size="10.5" fill="#3434cc" text-anchor="middle" font-style="italic" textLength="47" lengthAdjust="spacingAndGlyphs">h-2 690 мм</text><text x="872" y="965" font-size="10.5" fill="#222" text-anchor="middle" font-style="italic" textLength="28" lengthAdjust="spacingAndGlyphs">гр. 26</text><text x="888" y="974.6" font-size="10.5" fill="#222" text-anchor="middle" font-style="italic" textLength="80" lengthAdjust="spacingAndGlyphs">RGB LED-підсвітка</text><text x="888" y="984.5" font-size="10.5" fill="#222" text-anchor="middle" font-style="italic" textLength="24" lengthAdjust="spacingAndGlyphs">тумби</text><text x="886.7" y="997.7" font-size="10.5" fill="#3434cc" text-anchor="middle" font-style="italic" textLength="38" lengthAdjust="spacingAndGlyphs">h-250 мм</text><text x="880" y="1094" font-size="10.5" fill="#222" text-anchor="middle" font-style="italic" textLength="24" lengthAdjust="spacingAndGlyphs">гр. 5</text><text x="888" y="1104" font-size="10.5" fill="#222" text-anchor="middle" font-style="italic" textLength="80" lengthAdjust="spacingAndGlyphs">RGB LED-підсвітка</text><text x="888" y="1114" font-size="10.5" fill="#222" text-anchor="middle" font-style="italic" textLength="24" lengthAdjust="spacingAndGlyphs">стелі</text><text x="886" y="1126" font-size="10.5" fill="#3434cc" text-anchor="middle" font-style="italic" textLength="47" lengthAdjust="spacingAndGlyphs">h-2 690 мм</text><text x="1383.8" y="1128" font-size="10.5" fill="#222" text-anchor="middle" font-style="italic" textLength="28" lengthAdjust="spacingAndGlyphs">гр. 17</text><text x="1381" y="1138.3" font-size="10.5" fill="#222" text-anchor="middle" font-style="italic" textLength="61" lengthAdjust="spacingAndGlyphs">LED-підсвітка</text><text x="1381" y="1148.3" font-size="10.5" fill="#222" text-anchor="middle" font-style="italic" textLength="75" lengthAdjust="spacingAndGlyphs">робочої поверхні</text><text x="1381" y="1157.4" font-size="10.5" fill="#222" text-anchor="middle" font-style="italic" textLength="85" lengthAdjust="spacingAndGlyphs">колір світла 3000K</text><text x="1381" y="1171" font-size="10.5" fill="#3434cc" text-anchor="middle" font-style="italic" textLength="47" lengthAdjust="spacingAndGlyphs">h-1 460 мм</text><text x="1501.6" y="1151" font-size="10.5" fill="#222" text-anchor="middle" font-style="italic" textLength="28" lengthAdjust="spacingAndGlyphs">гр. 18</text><text x="1499.6" y="1161" font-size="10.5" fill="#222" text-anchor="middle" font-style="italic" textLength="61" lengthAdjust="spacingAndGlyphs">LED-підсвітка</text><text x="1499.6" y="1171" font-size="10.5" fill="#222" text-anchor="middle" font-style="italic" textLength="56" lengthAdjust="spacingAndGlyphs">верхніх шаф,</text><text x="1499.6" y="1181" font-size="10.5" fill="#222" text-anchor="middle" font-style="italic" textLength="85" lengthAdjust="spacingAndGlyphs">колір світла 3000K</text><text x="1503.6" y="1193" font-size="10.5" fill="#3434cc" text-anchor="middle" font-style="italic" textLength="70" lengthAdjust="spacingAndGlyphs">Висоту уточнити</text><text x="1503.6" y="1202.8" font-size="10.5" fill="#3434cc" text-anchor="middle" font-style="italic" textLength="38" lengthAdjust="spacingAndGlyphs">на місці</text><text x="1405.7" y="1188" font-size="10.5" fill="#222" text-anchor="middle" font-style="italic" textLength="28" lengthAdjust="spacingAndGlyphs">гр. 16</text><text x="1405.7" y="1201" font-size="10.5" fill="#3434cc" text-anchor="middle" font-style="italic" textLength="47" lengthAdjust="spacingAndGlyphs">h-2 690 мм</text><text x="1184.7" y="1204" font-size="10.5" fill="#222" text-anchor="middle" font-style="italic" textLength="24" lengthAdjust="spacingAndGlyphs">гр. 3</text><text x="1182.7" y="1214.8" font-size="10.5" fill="#222" text-anchor="middle" font-style="italic" textLength="89" lengthAdjust="spacingAndGlyphs">LED-підсвітка шафи,</text><text x="1182.7" y="1224.7" font-size="10.5" fill="#222" text-anchor="middle" font-style="italic" textLength="85" lengthAdjust="spacingAndGlyphs">колір світла 3000K</text><text x="1184.7" y="1237" font-size="10.5" fill="#3434cc" text-anchor="middle" font-style="italic" textLength="38" lengthAdjust="spacingAndGlyphs">h-500 мм</text><text x="1113" y="1249.8" font-size="10.5" fill="#222" text-anchor="middle" font-style="italic" textLength="24" lengthAdjust="spacingAndGlyphs">гр. 2</text><text x="1113" y="1260.6" font-size="10.5" fill="#222" text-anchor="middle" font-style="italic" textLength="122" lengthAdjust="spacingAndGlyphs">RGB LED-підсвітка дзеркала</text><text x="1154" y="1277.7" font-size="10.5" fill="#222" text-anchor="middle" font-style="italic" textLength="24" lengthAdjust="spacingAndGlyphs">гр. 1</text><text x="1150" y="1290.4" font-size="10.5" fill="#3434cc" text-anchor="middle" font-style="italic" textLength="47" lengthAdjust="spacingAndGlyphs">h-2 690 мм</text><text x="1433" y="1251" font-size="10.5" fill="#3434cc" text-anchor="middle" font-style="italic" textLength="75" lengthAdjust="spacingAndGlyphs">Гіпсовий врізний</text><text x="1433" y="1261" font-size="10.5" fill="#3434cc" text-anchor="middle" font-style="italic" textLength="47" lengthAdjust="spacingAndGlyphs">світильник</text><text x="1433" y="1271" font-size="10.5" fill="#3434cc" text-anchor="middle" font-style="italic" textLength="56" lengthAdjust="spacingAndGlyphs">AGARA CB 005</text><text x="927.8" y="1323.5" font-size="10.5" fill="#222" text-anchor="middle" font-style="italic" textLength="28" lengthAdjust="spacingAndGlyphs">гр. 23</text><text x="929.8" y="1333.5" font-size="10.5" fill="#222" text-anchor="middle" font-style="italic" textLength="61" lengthAdjust="spacingAndGlyphs">LED-підсвітка</text><text x="929.8" y="1343.4" font-size="10.5" fill="#222" text-anchor="middle" font-style="italic" textLength="38" lengthAdjust="spacingAndGlyphs">дзеркала</text><text x="929.8" y="1354.6" font-size="10.5" fill="#3434cc" text-anchor="middle" font-style="italic" textLength="47" lengthAdjust="spacingAndGlyphs">Розміщення</text><text x="929.8" y="1364.5" font-size="10.5" fill="#3434cc" text-anchor="middle" font-style="italic" textLength="38" lengthAdjust="spacingAndGlyphs">уточнити</text><text x="929.8" y="1374.5" font-size="10.5" fill="#3434cc" text-anchor="middle" font-style="italic" textLength="38" lengthAdjust="spacingAndGlyphs">на місці</text><text x="770.4" y="1355" font-size="10.5" fill="#3434cc" text-anchor="middle" font-style="italic" textLength="141" lengthAdjust="spacingAndGlyphs">Вбудований точковий світильник</text><text x="770.4" y="1364.7" font-size="10.5" fill="#3434cc" text-anchor="middle" font-style="italic" textLength="70" lengthAdjust="spacingAndGlyphs">Eglo ZIGO 61714</text><text x="770.4" y="1374.5" font-size="10.5" fill="#3434cc" text-anchor="middle" font-style="italic" textLength="132" lengthAdjust="spacingAndGlyphs">із вологозахистом класу IP54</text><text x="516" y="1424.5" font-size="10.5" fill="#222" text-anchor="middle" font-style="italic" textLength="28" lengthAdjust="spacingAndGlyphs">гр. 19</text><text x="514" y="1437" font-size="10.5" fill="#3434cc" text-anchor="middle" font-style="italic" textLength="47" lengthAdjust="spacingAndGlyphs">h-2 690 мм</text><text x="933.8" y="1474.8" font-size="10.5" fill="#222" text-anchor="middle" font-style="italic" textLength="28" lengthAdjust="spacingAndGlyphs">гр. 19</text><text x="929.8" y="1486.8" font-size="10.5" fill="#3434cc" text-anchor="middle" font-style="italic" textLength="47" lengthAdjust="spacingAndGlyphs">h-2 690 мм</text><text x="1101" y="1425" font-size="10.5" fill="#222" text-anchor="middle" font-style="italic" textLength="28" lengthAdjust="spacingAndGlyphs">гр. 22</text><text x="1101" y="1435.8" font-size="10.5" fill="#222" text-anchor="middle" font-style="italic" textLength="127" lengthAdjust="spacingAndGlyphs">LED-підсвітка під дзеркалом</text><text x="1101" y="1446" font-size="10.5" fill="#222" text-anchor="middle" font-style="italic" textLength="70" lengthAdjust="spacingAndGlyphs">на датчику руху</text><text x="1098" y="1459.7" font-size="10.5" fill="#3434cc" text-anchor="middle" font-style="italic" textLength="47" lengthAdjust="spacingAndGlyphs">h-1 150 мм</text><text x="485.7" y="1531" font-size="10.5" fill="#222" text-anchor="middle" font-style="italic" textLength="28" lengthAdjust="spacingAndGlyphs">гр. 20</text><text x="500" y="1541" font-size="10.5" fill="#222" text-anchor="middle" font-style="italic" textLength="108" lengthAdjust="spacingAndGlyphs">RGB LED-підсвітка стелі</text><text x="417" y="619" font-size="10.5" fill="#222" text-anchor="middle" font-style="italic">300</text><text x="511" y="619" font-size="10.5" fill="#222" text-anchor="middle" font-style="italic">1 300</text><text x="599.5" y="619" font-size="10.5" fill="#222" text-anchor="middle" font-style="italic">200</text><text x="707" y="619" font-size="10.5" fill="#222" text-anchor="middle" font-style="italic">1 600</text><text x="427" y="684" font-size="10.5" fill="#222" text-anchor="middle" font-style="italic">300</text><text x="472" y="724" font-size="10.5" fill="#222" text-anchor="middle" font-style="italic">1 255</text><text x="480" y="762" font-size="10.5" fill="#222" text-anchor="middle" font-style="italic">1 140</text><text x="724" y="785" font-size="10.5" fill="#222" text-anchor="middle" font-style="italic">1 320</text><text x="724" y="1176.5" font-size="10.5" fill="#222" text-anchor="middle" font-style="italic">1 320</text><text x="880.7" y="644" font-size="10.5" fill="#222" text-anchor="middle" font-style="italic">1 100</text><text x="1022" y="644" font-size="10.5" fill="#222" text-anchor="middle" font-style="italic">1 300</text><text x="1164.6" y="644" font-size="10.5" fill="#222" text-anchor="middle" font-style="italic">1 100</text><text x="880.7" y="1035" font-size="10.5" fill="#222" text-anchor="middle" font-style="italic">1 100</text><text x="1022.6" y="1035" font-size="10.5" fill="#222" text-anchor="middle" font-style="italic">1 300</text><text x="1164.7" y="1035" font-size="10.5" fill="#222" text-anchor="middle" font-style="italic">1 100</text><text x="1434" y="657" font-size="10.5" fill="#222" text-anchor="middle" font-style="italic">1 400</text><text x="1560.8" y="657" font-size="10.5" fill="#222" text-anchor="middle" font-style="italic">720</text><text x="1515" y="686" font-size="10.5" fill="#222" text-anchor="middle" font-style="italic">1 420</text><text x="1545" y="698" font-size="10.5" fill="#222" text-anchor="middle" font-style="italic">1 130</text><text x="1496.8" y="852" font-size="10.5" fill="#222" text-anchor="middle" font-style="italic">1 720</text><text x="1434.7" y="929" font-size="10.5" fill="#222" text-anchor="middle" font-style="italic">1 400</text><text x="1560" y="929" font-size="10.5" fill="#222" text-anchor="middle" font-style="italic">720</text><text x="1061" y="1301.6" font-size="10.5" fill="#222" text-anchor="middle" font-style="italic">730</text><text x="1150.8" y="1301.6" font-size="10.5" fill="#222" text-anchor="middle" font-style="italic">790</text><text x="943.7" y="1273.7" font-size="10.5" fill="#222" text-anchor="middle" font-style="italic">1 000</text><text x="915.8" y="1194" font-size="10.5" fill="#222" text-anchor="middle" font-style="italic">1 705</text><text x="1364" y="1213" font-size="10.5" fill="#222" text-anchor="middle" font-style="italic">200</text><text x="1427.6" y="1213" font-size="10.5" fill="#222" text-anchor="middle" font-style="italic">870</text><text x="1491.7" y="1213" font-size="10.5" fill="#222" text-anchor="middle" font-style="italic">200</text><text x="1553.4" y="1213" font-size="10.5" fill="#222" text-anchor="middle" font-style="italic">840</text><text x="429" y="1464.7" font-size="10.5" fill="#222" text-anchor="middle" font-style="italic">530</text><text x="471.5" y="1464.7" font-size="10.5" fill="#222" text-anchor="middle" font-style="italic">200</text><text x="494.3" y="1464.7" font-size="10.5" fill="#222" text-anchor="middle" font-style="italic">200</text><text x="540" y="1464.7" font-size="10.5" fill="#222" text-anchor="middle" font-style="italic">530</text><text x="849.8" y="1274.5" font-size="10.5" fill="#222" text-anchor="middle" font-style="italic">590</text><text x="943.7" y="1499.5" font-size="10.5" fill="#222" text-anchor="middle" font-style="italic">1 000</text><text x="384" y="636.6" font-size="10.5" fill="#222" text-anchor="middle" font-style="italic" transform="rotate(-90 384 636.6)">1 265</text><text x="443.7" y="636" font-size="10.5" fill="#222" text-anchor="middle" font-style="italic" transform="rotate(-90 443.7 636)">1 000</text><text x="445.7" y="585" font-size="10.5" fill="#222" text-anchor="middle" font-style="italic" transform="rotate(-90 445.7 585)">140</text><text x="443.7" y="688" font-size="10.5" fill="#222" text-anchor="middle" font-style="italic" transform="rotate(-90 443.7 688)">140</text><text x="564.7" y="729" font-size="10.5" fill="#222" text-anchor="middle" font-style="italic" transform="rotate(-90 564.7 729)">305</text><text x="425" y="781.7" font-size="10.5" fill="#222" text-anchor="middle" font-style="italic" transform="rotate(-90 425 781.7)">600</text><text x="626" y="777.5" font-size="10.5" fill="#222" text-anchor="middle" font-style="italic" transform="rotate(-90 626 777.5)">160</text><text x="433.8" y="981" font-size="10.5" fill="#222" text-anchor="middle" font-style="italic" transform="rotate(-90 433.8 981)">3 925</text><text x="624.4" y="982.4" font-size="10.5" fill="#222" text-anchor="middle" font-style="italic" transform="rotate(-90 624.4 982.4)">3 600</text><text x="433.7" y="1255" font-size="10.5" fill="#222" text-anchor="middle" font-style="italic" transform="rotate(-90 433.7 1255)">710</text><text x="624" y="1248.7" font-size="10.5" fill="#222" text-anchor="middle" font-style="italic" transform="rotate(-90 624 1248.7)">860</text><text x="862" y="1250" font-size="10.5" fill="#222" text-anchor="middle" font-style="italic" transform="rotate(-90 862 1250)">400</text><text x="861" y="1286.7" font-size="10.5" fill="#222" text-anchor="middle" font-style="italic" transform="rotate(-90 861 1286.7)">200</text><text x="861" y="1337.8" font-size="10.5" fill="#222" text-anchor="middle" font-style="italic" transform="rotate(-90 861 1337.8)">650</text><text x="861" y="1390" font-size="10.5" fill="#222" text-anchor="middle" font-style="italic" transform="rotate(-90 861 1390)">200</text><text x="861" y="1437.8" font-size="10.5" fill="#222" text-anchor="middle" font-style="italic" transform="rotate(-90 861 1437.8)">650</text><text x="861" y="1489" font-size="10.5" fill="#222" text-anchor="middle" font-style="italic" transform="rotate(-90 861 1489)">200</text><text x="380.5" y="1487.8" font-size="10.5" fill="#222" text-anchor="middle" font-style="italic" transform="rotate(-90 380.5 1487.8)">2 250</text><text x="932.5" y="590" font-size="10.5" fill="#222" text-anchor="middle" font-style="italic" transform="rotate(-90 932.5 590)">550</text><text x="1084" y="590" font-size="10.5" fill="#222" text-anchor="middle" font-style="italic" transform="rotate(-90 1084 590)">550</text><text x="1333.7" y="590" font-size="10.5" fill="#222" text-anchor="middle" font-style="italic" transform="rotate(-90 1333.7 590)">550</text><text x="1522" y="594" font-size="10.5" fill="#222" text-anchor="middle" font-style="italic" transform="rotate(-90 1522 594)">550</text><text x="932.5" y="985" font-size="10.5" fill="#222" text-anchor="middle" font-style="italic" transform="rotate(-90 932.5 985)">3 600</text><text x="1084" y="985" font-size="10.5" fill="#222" text-anchor="middle" font-style="italic" transform="rotate(-90 1084 985)">3 600</text><text x="1329.5" y="787" font-size="10.5" fill="#222" text-anchor="middle" font-style="italic" transform="rotate(-90 1329.5 787)">2 700</text><text x="1523.6" y="787.4" font-size="10.5" fill="#222" text-anchor="middle" font-style="italic" transform="rotate(-90 1523.6 787.4)">2 700</text><text x="1582" y="787.4" font-size="10.5" fill="#222" text-anchor="middle" font-style="italic" transform="rotate(-90 1582 787.4)">3 795</text><text x="1411" y="787" font-size="10.5" fill="#222" text-anchor="middle" font-style="italic" transform="rotate(-90 1411 787)">1 400</text><text x="1416" y="632" font-size="10.5" fill="#222" text-anchor="middle" font-style="italic" transform="rotate(-90 1416 632)">1 200</text><text x="1451.6" y="632" font-size="10.5" fill="#222" text-anchor="middle" font-style="italic" transform="rotate(-90 1451.6 632)">1 270</text><text x="830" y="885" font-size="10.5" fill="#222" text-anchor="middle" font-style="italic" transform="rotate(-90 830 885)">5 485</text><text x="926.8" y="1135" font-size="10.5" fill="#222" text-anchor="middle" font-style="italic" transform="rotate(-90 926.8 1135)">1 340</text><text x="1026" y="1229" font-size="10.5" fill="#222" text-anchor="middle" font-style="italic" transform="rotate(-90 1026 1229)">330</text><text x="1080" y="1288.6" font-size="10.5" fill="#222" text-anchor="middle" font-style="italic" transform="rotate(-90 1080 1288.6)">200</text><text x="1080" y="1312.5" font-size="10.5" fill="#222" text-anchor="middle" font-style="italic" transform="rotate(-90 1080 1312.5)">200</text><text x="1080" y="1358.3" font-size="10.5" fill="#222" text-anchor="middle" font-style="italic" transform="rotate(-90 1080 1358.3)">550</text><text x="1237" y="1276.7" font-size="10.5" fill="#222" text-anchor="middle" font-style="italic" transform="rotate(-90 1237 1276.7)">1 120</text><text x="1345" y="1286.6" font-size="10.5" fill="#222" text-anchor="middle" font-style="italic" transform="rotate(-90 1345 1286.6)">960</text><text x="1486.7" y="1286.6" font-size="10.5" fill="#222" text-anchor="middle" font-style="italic" transform="rotate(-90 1486.7 1286.6)">960</text><text x="960.6" y="1262.7" font-size="10.5" fill="#222" text-anchor="middle" font-style="italic" transform="rotate(-90 960.6 1262.7)">580</text><text x="972.6" y="1292.6" font-size="10.5" fill="#222" text-anchor="middle" font-style="italic" transform="rotate(-90 972.6 1292.6)">960</text><text x="972.6" y="1354.4" font-size="10.5" fill="#222" text-anchor="middle" font-style="italic" transform="rotate(-90 972.6 1354.4)">40</text><text x="960.6" y="1378" font-size="10.5" fill="#222" text-anchor="middle" font-style="italic" transform="rotate(-90 960.6 1378)">1 400</text><rect x="1853.6" y="525" width="255.9000000000001" height="547.5" fill="#fff" stroke="#111" stroke-width="1.6" /><line x1="1853.6" y1="555.2" x2="2109.5" y2="555.2" stroke="#111" stroke-width="1.4" /><line x1="1853.6" y1="595.3" x2="2109.5" y2="595.3" stroke="#111" stroke-width="1.4" /><line x1="1853.6" y1="635.4" x2="2109.5" y2="635.4" stroke="#111" stroke-width="1.4" /><line x1="1853.6" y1="674.6" x2="2109.5" y2="674.6" stroke="#111" stroke-width="1.4" /><line x1="1853.6" y1="714.7" x2="2109.5" y2="714.7" stroke="#111" stroke-width="1.4" /><line x1="1853.6" y1="754.8" x2="2109.5" y2="754.8" stroke="#111" stroke-width="1.4" /><line x1="1853.6" y1="794.5" x2="2109.5" y2="794.5" stroke="#111" stroke-width="1.4" /><line x1="1853.6" y1="833.7" x2="2109.5" y2="833.7" stroke="#111" stroke-width="1.4" /><line x1="1853.6" y1="873.8" x2="2109.5" y2="873.8" stroke="#111" stroke-width="1.4" /><line x1="1853.6" y1="913.9" x2="2109.5" y2="913.9" stroke="#111" stroke-width="1.4" /><line x1="1853.6" y1="953.5" x2="2109.5" y2="953.5" stroke="#111" stroke-width="1.4" /><line x1="1853.6" y1="993.2" x2="2109.5" y2="993.2" stroke="#111" stroke-width="1.4" /><line x1="1853.6" y1="1032.9" x2="2109.5" y2="1032.9" stroke="#111" stroke-width="1.4" /><line x1="1913.8" y1="525" x2="1913.8" y2="1072.5" stroke="#111" stroke-width="1.4" /><line x1="2064.7" y1="525" x2="2064.7" y2="1072.5" stroke="#111" stroke-width="1.4" /><text x="1990" y="516" font-size="12.5" fill="#222" text-anchor="middle" font-style="italic">Умовні позначення:</text><line x1="1936" y1="519" x2="2045" y2="519" stroke="#222" stroke-width="1" /><text x="1883.7" y="544" font-size="10.5" fill="#222" text-anchor="middle" font-style="italic">Позн.</text><text x="1989" y="545" font-size="11" fill="#222" text-anchor="middle" font-style="italic">Найменування</text><text x="2087" y="544" font-size="10.5" fill="#222" text-anchor="middle" font-style="italic">К-сть</text><text x="1989" y="574.0" font-size="9.5" fill="#333" text-anchor="middle" font-style="italic" textLength="73" lengthAdjust="spacingAndGlyphs">Гіпсовий врізний</text><text x="1989" y="583.5" font-size="9.5" fill="#333" text-anchor="middle" font-style="italic" textLength="105" lengthAdjust="spacingAndGlyphs">світильник AGARA CB 005</text><text x="2087" y="579.25" font-size="10" fill="#222" text-anchor="middle" font-style="italic">9 шт.</text><circle cx="1883.7" cy="575.25" r="4" fill="none" stroke="#4848d8" stroke-width="1.4"/><circle cx="1883.7" cy="575.25" r="1.5" fill="#4848d8"/><text x="1989" y="609.3499999999999" font-size="9.5" fill="#333" text-anchor="middle" font-style="italic" textLength="138" lengthAdjust="spacingAndGlyphs">Вбудований точковий світильник</text><text x="1989" y="618.8499999999999" font-size="9.5" fill="#333" text-anchor="middle" font-style="italic" textLength="69" lengthAdjust="spacingAndGlyphs">Eglo ZIGO 61714</text><text x="1989" y="628.3499999999999" font-size="9.5" fill="#333" text-anchor="middle" font-style="italic" textLength="128" lengthAdjust="spacingAndGlyphs">із вологозахистом класу IP54</text><text x="2087" y="619.3499999999999" font-size="10" fill="#222" text-anchor="middle" font-style="italic">9 шт.</text><circle cx="1883.7" cy="615.3499999999999" r="4" fill="none" stroke="#3aa84a" stroke-width="1.4"/><circle cx="1883.7" cy="615.3499999999999" r="1.5" fill="#3aa84a"/><text x="1989" y="653.75" font-size="9.5" fill="#333" text-anchor="middle" font-style="italic" textLength="92" lengthAdjust="spacingAndGlyphs">Вбудований магнітний</text><text x="1989" y="663.25" font-size="9.5" fill="#333" text-anchor="middle" font-style="italic" textLength="50" lengthAdjust="spacingAndGlyphs">трек Kloodi</text><text x="2087" y="659.0" font-size="10" fill="#222" text-anchor="middle" font-style="italic">16,2 м п.</text><line x1="1857" y1="655.0" x2="1911" y2="655.0" stroke="#a04030" stroke-width="1.4" /><text x="1989" y="688.6500000000001" font-size="9.5" fill="#333" text-anchor="middle" font-style="italic" textLength="128" lengthAdjust="spacingAndGlyphs">Світильник лінійний 24 W 30°</text><text x="1989" y="698.1500000000001" font-size="9.5" fill="#333" text-anchor="middle" font-style="italic" textLength="96" lengthAdjust="spacingAndGlyphs">3000K 220mm Osram3030</text><text x="1989" y="707.6500000000001" font-size="9.5" fill="#333" text-anchor="middle" font-style="italic" textLength="119" lengthAdjust="spacingAndGlyphs">1920LM, Чорний мат, 48V DC</text><text x="2087" y="698.6500000000001" font-size="10" fill="#222" text-anchor="middle" font-style="italic">11 шт.</text><rect x="1857" y="692.1500000000001" width="54" height="5.0" fill="#6a78ee" stroke="#2a2a9a" stroke-width="1" /><text x="1989" y="728.75" font-size="9.5" fill="#333" text-anchor="middle" font-style="italic" textLength="105" lengthAdjust="spacingAndGlyphs">Підвісний світильник на</text><text x="1989" y="738.25" font-size="9.5" fill="#333" text-anchor="middle" font-style="italic" textLength="87" lengthAdjust="spacingAndGlyphs">замовлення LIGHT24,</text><text x="1989" y="747.75" font-size="9.5" fill="#333" text-anchor="middle" font-style="italic" textLength="82" lengthAdjust="spacingAndGlyphs">колір світла 3000K</text><text x="2087" y="738.75" font-size="10" fill="#222" text-anchor="middle" font-style="italic">3 шт.</text><circle cx="1883.7" cy="734.75" r="4" fill="none" stroke="#c04040" stroke-width="1.4"/><circle cx="1883.7" cy="734.75" r="1.5" fill="#c04040"/><text x="1989" y="778.15" font-size="9.5" fill="#333" text-anchor="middle" font-style="italic" textLength="13" lengthAdjust="spacingAndGlyphs">Бра</text><text x="2087" y="778.65" font-size="10" fill="#222" text-anchor="middle" font-style="italic">1 шт.</text><path d="M1876 779.65A8 8 0 0 1 1892 779.65Z" fill="none" stroke="#b03030" stroke-width="1.5"/><text x="1989" y="817.6" font-size="9.5" fill="#333" text-anchor="middle" font-style="italic" textLength="69" lengthAdjust="spacingAndGlyphs">Настільна лампа</text><text x="2087" y="818.1" font-size="10" fill="#222" text-anchor="middle" font-style="italic">1 шт.</text><path d="M1876 819.1A8 8 0 0 1 1892 819.1Z" fill="none" stroke="#5050d0" stroke-width="1.5"/><text x="1989" y="852.5" font-size="9.5" fill="#333" text-anchor="middle" font-style="italic" textLength="114" lengthAdjust="spacingAndGlyphs">RGB LED-підсвітка стелі в</text><text x="1989" y="862.0" font-size="9.5" fill="#333" text-anchor="middle" font-style="italic" textLength="133" lengthAdjust="spacingAndGlyphs">профілі тіньового шва АПТШ 21</text><text x="2087" y="857.75" font-size="10" fill="#222" text-anchor="middle" font-style="italic">19,5м п.</text><path d="M1857 853.75H1911" stroke="#3aa84a" stroke-width="4.5"/><path d="M1857 853.75H1911" stroke="#dfd" stroke-width="1" stroke-dasharray="3 3"/><text x="1989" y="887.8499999999999" font-size="9.5" fill="#333" text-anchor="middle" font-style="italic" textLength="82" lengthAdjust="spacingAndGlyphs">LED-підсвітка, яка</text><text x="1989" y="897.3499999999999" font-size="9.5" fill="#333" text-anchor="middle" font-style="italic" textLength="110" lengthAdjust="spacingAndGlyphs">виготовляється меблярами</text><text x="1989" y="906.8499999999999" font-size="9.5" fill="#333" text-anchor="middle" font-style="italic" textLength="92" lengthAdjust="spacingAndGlyphs">(колір світла 3000K)</text><path d="M1857 893.8499999999999H1911" stroke="#7a7ae6" stroke-width="3" stroke-dasharray="3 1.5"/><text x="1989" y="932.45" font-size="9.5" fill="#333" text-anchor="middle" font-style="italic" textLength="92" lengthAdjust="spacingAndGlyphs">RGB LED-підсвітка із</text><text x="1989" y="941.95" font-size="9.5" fill="#333" text-anchor="middle" font-style="italic" textLength="114" lengthAdjust="spacingAndGlyphs">вологозахистом класу IP44</text><text x="2087" y="937.7" font-size="10" fill="#222" text-anchor="middle" font-style="italic">1,35 м п.</text><path d="M1857 933.7H1911" stroke="#e0a040" stroke-width="3" stroke-dasharray="3 1.5"/><text x="1989" y="972.1" font-size="9.5" fill="#333" text-anchor="middle" font-style="italic" textLength="124" lengthAdjust="spacingAndGlyphs">RGB LED-підсвітка дзеркала,</text><text x="1989" y="981.6" font-size="9.5" fill="#333" text-anchor="middle" font-style="italic" textLength="128" lengthAdjust="spacingAndGlyphs">яка виготовляється меблярами</text><path d="M1857 973.35H1911" stroke="#d05040" stroke-width="3.5" stroke-dasharray="3 1.5"/><text x="1989" y="1016.5500000000001" font-size="9.5" fill="#333" text-anchor="middle" font-style="italic" textLength="96" lengthAdjust="spacingAndGlyphs">Габарити ніші в стелі</text><path d="M1857 1013.0500000000001H1911" stroke="#2a8a8a" stroke-width="3" stroke-dasharray="5 3"/><text x="1989" y="1056.2" font-size="9.5" fill="#333" text-anchor="middle" font-style="italic" textLength="142" lengthAdjust="spacingAndGlyphs">Габарити підвісного світильника</text><path d="M1857 1052.7H1911" stroke="#888" stroke-width="3" stroke-dasharray="5 3"/><text x="1233" y="1393.0" font-size="13" fill="#b03a2a" font-style="italic" textLength="66" lengthAdjust="spacingAndGlyphs">Примітка:</text><text x="1233" y="1406.5" font-size="13" fill="#3434cc" font-style="italic" textLength="277.79999999999995" lengthAdjust="spacingAndGlyphs">- фурнітура Hager Berker K1 (антрацит);</text><text x="1233" y="1420.0" font-size="13" fill="#3434cc" font-style="italic" textLength="405" lengthAdjust="spacingAndGlyphs">- всі трансформатори LED-підсвіток виведені СЛАБОТОЧКУ;</text><text x="1233" y="1433.5" font-size="13" fill="#b03a2a" font-style="italic" textLength="302.5" lengthAdjust="spacingAndGlyphs">- позначки висот вказані від чистої підлоги;</text><text x="1233" y="1447.0" font-size="13" fill="#b03a2a" font-style="italic" textLength="581" lengthAdjust="spacingAndGlyphs">-розміри вказані без урахування обробки стін, уточнити після оздоблювальних робіт;</text><text x="1233" y="1460.5" font-size="13" fill="#b03a2a" font-style="italic" textLength="482.5" lengthAdjust="spacingAndGlyphs">-прив'язку підвісних світильників і бра уточнити на місці з дизайнером;</text><text x="1233" y="1474.0" font-size="13" fill="#b03a2a" font-style="italic" textLength="432" lengthAdjust="spacingAndGlyphs">-виводи для підсвічування меблів уточнити після вибору меблів;</text><text x="1233" y="1487.5" font-size="13" fill="#b03a2a" font-style="italic" textLength="649" lengthAdjust="spacingAndGlyphs">-в санвузлах використовувати світильники і лампочки з вологозахистом не менше класу IP 44;</text><text x="1233" y="1501.0" font-size="13" fill="#b03a2a" font-style="italic" textLength="511.5999999999999" lengthAdjust="spacingAndGlyphs">-уточніть розміщення електричних виводів під техніку після вибору меблів;</text><text x="1233" y="1514.5" font-size="13" fill="#b03a2a" font-style="italic" textLength="680.8" lengthAdjust="spacingAndGlyphs">-всі вимикачі розміщені на висоті 900 мм від чистого рівня підлоги (за винятком зазначених окремо);</text><text x="1233" y="1528.0" font-size="13" fill="#b03a2a" font-style="italic" textLength="601" lengthAdjust="spacingAndGlyphs">-висота всіх розеток 300 мм від чистого рівня підлоги (за винятком зазначених окремо);</text><text x="1233" y="1541.5" font-size="13" fill="#b03a2a" font-style="italic" textLength="545" lengthAdjust="spacingAndGlyphs">-виводи для розеток, розташованих над меблями, уточнити після вибору меблів;</text></g></svg><!--PLAN_END-->

<!-- TILES --><!--TILES_START--><div class="a" style="left:2464px;top:136px;width:282px;height:372px;border-radius:31px;background:#a8c7fa"></div>
<div class="a" style="left:2470px;top:142px;width:270px;height:360px;border-radius:26px;background:#6e5e55;overflow:hidden"><div class="a" style="left:-20px;top:-20px;width:320px;height:400px;background:#6e5e55;filter:blur(0px);"></div><div class="a" style="left:-20px;top:-20px;width:120px;height:90px;background:#c2bfbb;filter:blur(10px);"></div><div class="a" style="left:200px;top:-20px;width:100px;height:90px;background:#aeaeac;filter:blur(10px);"></div><div class="a" style="left:-20px;top:60px;width:90px;height:180px;background:#5e3b2a;filter:blur(12px);"></div><div class="a" style="left:215px;top:50px;width:80px;height:140px;background:#70503f;filter:blur(12px);"></div><div class="a" style="left:-20px;top:200px;width:110px;height:180px;background:#3a2e26;filter:blur(12px);"></div><div class="a" style="left:55px;top:-30px;width:190px;height:150px;border-radius:50%;background:#1e1a19;filter:blur(8px);"></div><div class="a" style="left:45px;top:20px;width:80px;height:330px;border-radius:50%;background:#1c1817;filter:blur(10px);"></div><div class="a" style="left:190px;top:40px;width:90px;height:330px;border-radius:50%;background:#1d1918;filter:blur(10px);"></div><div class="a" style="left:-20px;top:230px;width:200px;height:150px;background:#2d3128;filter:blur(10px);"></div><div class="a" style="left:170px;top:280px;width:120px;height:100px;background:#2b2f26;filter:blur(10px);"></div><div class="a" style="left:100px;top:30px;width:118px;height:148px;border-radius:50%;background:#c9c0bc;filter:blur(6px);"></div><div class="a" style="left:134px;top:150px;width:58px;height:100px;border-radius:50%;background:#bab2ad;filter:blur(8px);"></div><div class="a" style="left:0;top:0;width:270px;height:360px;filter:blur(6px)"><div class="a" style="left:138px;top:210px;width:74px;height:82px;background:#b4aca7;clip-path:polygon(0 0,100% 0,55% 100%)"></div></div><div class="a" style="left:114px;top:72px;width:30px;height:8px;border-radius:50%;background:#6a5852;filter:blur(3px);"></div><div class="a" style="left:165px;top:70px;width:30px;height:8px;border-radius:50%;background:#6a5852;filter:blur(3px);"></div><div class="a" style="left:140px;top:105px;width:22px;height:30px;border-radius:50%;background:#bcb0ab;filter:blur(4px);"></div><div class="a" style="left:135px;top:132px;width:44px;height:14px;border-radius:50%;background:#a88080;filter:blur(3px);"></div></div>
<div class="a" style="left:2675px;top:157px;width:48px;height:48px;border-radius:50%;background:#a8c7fa"></div>
<div class="a" style="left:2685px;top:172px;width:8px;height:22px;border-radius:4px;background:#0b2f7a"></div>
<div class="a" style="left:2695px;top:169px;width:8px;height:27px;border-radius:4px;background:#0b2f7a"></div>
<div class="a" style="left:2707px;top:172px;width:8px;height:22px;border-radius:4px;background:#0b2f7a"></div>
<div class="t" style="left:2495px;top:448px;font-size:31.5px;font-weight:bold;letter-spacing:-0.5px;color:#fff;text-shadow:0 1px 3px rgba(0,0,0,.55)">Мирослава...</div>
<div class="a" style="left:2764px;top:142px;width:270px;height:360px;border-radius:26px;background:#8a8079;overflow:hidden"><div class="a" style="left:-20px;top:-20px;width:320px;height:400px;background:#857b75;filter:blur(0px);"></div><div class="a" style="left:-20px;top:-20px;width:320px;height:70px;background:#8e857f;filter:blur(12px);"></div><div class="a" style="left:-20px;top:50px;width:320px;height:40px;background:#a39a94;filter:blur(12px);"></div><div class="a" style="left:-20px;top:100px;width:320px;height:30px;background:#6e6660;filter:blur(10px);"></div><div class="a" style="left:150px;top:115px;width:80px;height:170px;background:#3c3836;filter:blur(10px);"></div><div class="a" style="left:228px;top:160px;width:40px;height:70px;background:#e6e2da;filter:blur(8px);"></div><div class="a" style="left:172px;top:215px;width:36px;height:55px;background:#bdb9b4;filter:blur(8px);"></div><div class="a" style="left:-20px;top:110px;width:50px;height:200px;background:#6a6a6e;filter:blur(10px);"></div><div class="a" style="left:37px;top:120px;width:124px;height:162px;border-radius:50%;background:#c9a294;filter:blur(6px);"></div><div class="a" style="left:52px;top:118px;width:100px;height:50px;border-radius:50%;background:#c4bab2;filter:blur(7px);"></div><div class="a" style="left:45px;top:190px;width:110px;height:85px;border-radius:50%;background:#b98676;filter:blur(7px);"></div><div class="a" style="left:36px;top:186px;width:108px;height:3px;background:rgba(235,230,225,.55);filter:blur(2px);"></div><div class="a" style="left:38px;top:190px;width:48px;height:22px;background:rgba(110,60,60,.28);filter:blur(3px);"></div><div class="a" style="left:90px;top:190px;width:50px;height:22px;background:rgba(110,60,60,.28);filter:blur(3px);"></div><div class="a" style="left:0;top:0;width:270px;height:360px;filter:blur(6px)"><div class="a" style="left:-10px;top:270px;width:300px;height:100px;background:#d9d7d3;clip-path:polygon(0 22%,60% 0,100% 5%,100% 100%,0 100%)"></div></div><div class="a" style="left:-20px;top:300px;width:40px;height:80px;background:#9c9a96;filter:blur(8px);"></div><div class="a" style="left:150px;top:340px;width:26px;height:14px;background:#c04848;filter:blur(2px);"></div></div>
<div class="a" style="left:2970px;top:157px;width:48px;height:48px;border-radius:50%;background:rgba(40,40,40,.72)"></div>
<svg class="a" style="left:2978px;top:165px" width="32" height="32" viewBox="0 0 24 24"><path fill="#e0e0e0" d="M19 11h-1.7c0 .74-.16 1.43-.43 2.05l1.23 1.23c.56-.98.9-2.09.9-3.28zm-4.02.17c0-.06.02-.11.02-.17V5c0-1.66-1.34-3-3-3S9 3.34 9 5v.18l5.98 5.99zM4.27 3L3 4.27l6.01 6.01V11c0 1.66 1.33 3 2.99 3 .22 0 .44-.03.65-.08l1.66 1.66c-.71.33-1.5.52-2.31.52-2.76 0-5.3-2.1-5.3-5.1H5c0 3.41 2.72 6.23 6 6.72V21h2v-3.28c.91-.13 1.77-.45 2.54-.9L19.73 21 21 19.73 4.27 3z"/></svg>
<div class="t" style="left:2789px;top:448px;font-size:31.5px;font-weight:bold;letter-spacing:-1.0px;color:#fff;text-shadow:0 1px 3px rgba(0,0,0,.55)">Кудрявцев ...</div>
<div class="a" style="left:3058px;top:142px;width:270px;height:360px;border-radius:26px;background:radial-gradient(ellipse 62% 55% at 50% 50%,#2f5d53 0%,#24493f 60%,#1a352f 100%);overflow:hidden"></div>
<div class="a" style="left:3121px;top:250px;width:144px;height:144px;border-radius:50%;background:#1f4c42;"></div>
<div class="a" style="left:3121px;top:250px;width:144px;height:144px;line-height:144px;text-align:center;font-size:78px;color:#fff">К</div>
<div class="a" style="left:3264px;top:157px;width:48px;height:48px;border-radius:50%;background:#1b3a34"></div>
<svg class="a" style="left:3272px;top:165px" width="32" height="32" viewBox="0 0 24 24"><path fill="#6ad3bb" d="M19 11h-1.7c0 .74-.16 1.43-.43 2.05l1.23 1.23c.56-.98.9-2.09.9-3.28zm-4.02.17c0-.06.02-.11.02-.17V5c0-1.66-1.34-3-3-3S9 3.34 9 5v.18l5.98 5.99zM4.27 3L3 4.27l6.01 6.01V11c0 1.66 1.33 3 2.99 3 .22 0 .44-.03.65-.08l1.66 1.66c-.71.33-1.5.52-2.31.52-2.76 0-5.3-2.1-5.3-5.1H5c0 3.41 2.72 6.23 6 6.72V21h2v-3.28c.91-.13 1.77-.45 2.54-.9L19.73 21 21 19.73 4.27 3z"/></svg>
<div class="t" style="left:3084px;top:448px;font-size:31.5px;font-weight:bold;letter-spacing:-0.67px;color:#fff;text-shadow:0 1px 3px rgba(0,0,0,.55)">Клименко ...</div>
<div class="a" style="left:2472px;top:526px;width:416px;height:360px;border-radius:26px;background:radial-gradient(ellipse 60% 60% at 50% 50%,#a4532f 0%,#8e3e20 55%,#6c2a14 100%);overflow:hidden"></div>
<div class="a" style="left:2608px;top:633px;width:144px;height:144px;border-radius:50%;background:#e35f35;"></div>
<div class="a" style="left:2608px;top:633px;width:144px;height:144px;line-height:144px;text-align:center;font-size:78px;color:#fff">М</div>
<div class="a" style="left:2824px;top:542px;width:48px;height:48px;border-radius:50%;background:#5a1a08"></div>
<svg class="a" style="left:2832px;top:550px" width="32" height="32" viewBox="0 0 24 24"><path fill="#f5b5a5" d="M19 11h-1.7c0 .74-.16 1.43-.43 2.05l1.23 1.23c.56-.98.9-2.09.9-3.28zm-4.02.17c0-.06.02-.11.02-.17V5c0-1.66-1.34-3-3-3S9 3.34 9 5v.18l5.98 5.99zM4.27 3L3 4.27l6.01 6.01V11c0 1.66 1.33 3 2.99 3 .22 0 .44-.03.65-.08l1.66 1.66c-.71.33-1.5.52-2.31.52-2.76 0-5.3-2.1-5.3-5.1H5c0 3.41 2.72 6.23 6 6.72V21h2v-3.28c.91-.13 1.77-.45 2.54-.9L19.73 21 21 19.73 4.27 3z"/></svg>
<div class="t" style="left:2497px;top:832px;font-size:31.5px;font-weight:bold;letter-spacing:-0.57px;color:#fff;text-shadow:0 1px 3px rgba(0,0,0,.55)">Мазнюк Валерія</div>
<div class="a" style="left:2912px;top:526px;width:416px;height:360px;border-radius:26px;background:radial-gradient(ellipse 60% 60% at 50% 50%,#5a38a8 0%,#45299a 55%,#2f1a7c 100%);overflow:hidden"></div>
<div class="a" style="left:3048px;top:633px;width:144px;height:144px;border-radius:50%;background:#4d30a4;"></div>
<div class="a" style="left:3048px;top:633px;width:144px;height:144px;line-height:144px;text-align:center;font-size:78px;color:#fff">Д</div>
<div class="a" style="left:3264px;top:542px;width:48px;height:48px;border-radius:50%;background:#3618a0"></div>
<svg class="a" style="left:3272px;top:550px" width="32" height="32" viewBox="0 0 24 24"><path fill="#cfc0ff" d="M19 11h-1.7c0 .74-.16 1.43-.43 2.05l1.23 1.23c.56-.98.9-2.09.9-3.28zm-4.02.17c0-.06.02-.11.02-.17V5c0-1.66-1.34-3-3-3S9 3.34 9 5v.18l5.98 5.99zM4.27 3L3 4.27l6.01 6.01V11c0 1.66 1.33 3 2.99 3 .22 0 .44-.03.65-.08l1.66 1.66c-.71.33-1.5.52-2.31.52-2.76 0-5.3-2.1-5.3-5.1H5c0 3.41 2.72 6.23 6 6.72V21h2v-3.28c.91-.13 1.77-.45 2.54-.9L19.73 21 21 19.73 4.27 3z"/></svg>
<div class="t" style="left:2936px;top:832px;font-size:31.5px;font-weight:bold;letter-spacing:-0.36px;color:#fff;text-shadow:0 1px 3px rgba(0,0,0,.55)">Діана Цимбалюк</div>
<div class="a" style="left:2580px;top:910px;width:640px;height:360px;border-radius:26px;background:radial-gradient(ellipse 55% 60% at 50% 50%,#39706a 0%,#2e5e57 55%,#204742 100%);overflow:hidden"></div>
<div class="a" style="left:2828px;top:1018px;width:144px;height:144px;border-radius:50%;background:#3d887a;"></div>
<div class="a" style="left:2828px;top:1018px;width:144px;height:144px;line-height:144px;text-align:center;font-size:78px;color:#fff">С</div>
<div class="a" style="left:3156px;top:926px;width:48px;height:48px;border-radius:50%;background:#1a3d38"></div>
<svg class="a" style="left:3164px;top:934px" width="32" height="32" viewBox="0 0 24 24"><path fill="#7ee0c8" d="M19 11h-1.7c0 .74-.16 1.43-.43 2.05l1.23 1.23c.56-.98.9-2.09.9-3.28zm-4.02.17c0-.06.02-.11.02-.17V5c0-1.66-1.34-3-3-3S9 3.34 9 5v.18l5.98 5.99zM4.27 3L3 4.27l6.01 6.01V11c0 1.66 1.33 3 2.99 3 .22 0 .44-.03.65-.08l1.66 1.66c-.71.33-1.5.52-2.31.52-2.76 0-5.3-2.1-5.3-5.1H5c0 3.41 2.72 6.23 6 6.72V21h2v-3.28c.91-.13 1.77-.45 2.54-.9L19.73 21 21 19.73 4.27 3z"/></svg>
<div class="t" style="left:2605px;top:1216px;font-size:31.5px;font-weight:bold;letter-spacing:-0.27px;color:#fff;text-shadow:0 1px 3px rgba(0,0,0,.55)">Сергій Олександрович Герасимнюк</div>
<div class="a" style="left:2470px;top:1294px;width:270px;height:360px;border-radius:26px;background:radial-gradient(ellipse 62% 55% at 50% 50%,#6e3d2c 0%,#5d3223 60%,#4c2417 100%);overflow:hidden"></div>
<div class="a" style="left:2533px;top:1402px;width:144px;height:144px;border-radius:50%;background:#5b4039;"></div>
<div class="a" style="left:2533px;top:1402px;width:144px;height:144px;line-height:144px;text-align:center;font-size:78px;color:#fff">Б</div>
<div class="a" style="left:2676px;top:1310px;width:48px;height:48px;border-radius:50%;background:#5c1f0a"></div>
<svg class="a" style="left:2684px;top:1318px" width="32" height="32" viewBox="0 0 24 24"><path fill="#f2b0a0" d="M19 11h-1.7c0 .74-.16 1.43-.43 2.05l1.23 1.23c.56-.98.9-2.09.9-3.28zm-4.02.17c0-.06.02-.11.02-.17V5c0-1.66-1.34-3-3-3S9 3.34 9 5v.18l5.98 5.99zM4.27 3L3 4.27l6.01 6.01V11c0 1.66 1.33 3 2.99 3 .22 0 .44-.03.65-.08l1.66 1.66c-.71.33-1.5.52-2.31.52-2.76 0-5.3-2.1-5.3-5.1H5c0 3.41 2.72 6.23 6 6.72V21h2v-3.28c.91-.13 1.77-.45 2.54-.9L19.73 21 21 19.73 4.27 3z"/></svg>
<div class="t" style="left:2495px;top:1600px;font-size:31.5px;font-weight:bold;letter-spacing:-1.0px;color:#fff;text-shadow:0 1px 3px rgba(0,0,0,.55)">Блага Веро...</div>
<div class="a" style="left:2764px;top:1294px;width:270px;height:360px;border-radius:26px;background:#353638;overflow:hidden"></div>
<div class="a" style="left:2825px;top:1398px;width:80px;height:80px;border-radius:50%;background:#7a2fa5;line-height:80px;text-align:center;font-size:44px;color:#fff">К</div>
<div class="a" style="left:2898px;top:1396px;width:84px;height:84px;border-radius:50%;background:#353638"></div>
<div class="a" style="left:2900px;top:1398px;width:80px;height:80px;border-radius:50%;overflow:hidden;background:#7d7770"><div class="a" style="left:-5px;top:-5px;width:90px;height:90px;background:#7d7770;filter:blur(0px);"></div><div class="a" style="left:10px;top:5px;width:60px;height:75px;border-radius:50%;background:#241b18;filter:blur(5px);"></div><div class="a" style="left:25px;top:18px;width:30px;height:40px;border-radius:50%;background:#c59e8a;filter:blur(3px);"></div><div class="a" style="left:10px;top:60px;width:60px;height:30px;background:#3a2d2a;filter:blur(4px);"></div></div>
<div class="t" style="left:2763px;top:1522px;width:272px;text-align:center;font-size:31.5px;font-weight:bold;letter-spacing:0px;color:#fff">Ще 44 особи</div>
<div class="a" style="left:3058px;top:1294px;width:270px;height:360px;border-radius:26px;background:radial-gradient(ellipse 80% 70% at 50% 25%,#524a7c 0%,#3c3669 55%,#29255a 100%);overflow:hidden"></div>
<div class="a" style="left:3121px;top:1402px;width:144px;height:144px;border-radius:50%;overflow:hidden;background:#3b3f4a"><div class="a" style="left:-10px;top:-10px;width:160px;height:160px;background:#2a2a30;filter:blur(0px);"></div><div class="a" style="left:30px;top:-10px;width:80px;height:30px;background:#c4bcb4;filter:blur(6px);"></div><div class="a" style="left:5px;top:10px;width:30px;height:35px;background:#1a1a1e;filter:blur(6px);"></div><div class="a" style="left:-10px;top:42px;width:62px;height:26px;background:#cfcfcf;filter:blur(5px);"></div><div class="a" style="left:-10px;top:68px;width:55px;height:30px;background:#3a3a3e;filter:blur(6px);"></div><div class="a" style="left:105px;top:35px;width:40px;height:30px;background:#9aaabb;filter:blur(6px);"></div><div class="a" style="left:100px;top:60px;width:50px;height:80px;background:#1c1e28;filter:blur(6px);"></div><div class="a" style="left:52px;top:32px;width:46px;height:66px;border-radius:50%;background:#d2b2a2;filter:blur(4px);"></div><div class="a" style="left:52px;top:10px;width:60px;height:38px;border-radius:50%;background:#4a3a2e;filter:blur(4px);"></div><div class="a" style="left:56px;top:90px;width:42px;height:20px;background:#c8a898;filter:blur(4px);"></div><div class="a" style="left:5px;top:97px;width:140px;height:60px;border-radius:40% 40% 0 0;background:#10121f;filter:blur(2px)"></div></div>
<div class="a" style="left:3264px;top:1310px;width:48px;height:48px;border-radius:50%;background:#262a8a"></div>
<svg class="a" style="left:3272px;top:1318px" width="32" height="32" viewBox="0 0 24 24"><path fill="#bcc4ff" d="M19 11h-1.7c0 .74-.16 1.43-.43 2.05l1.23 1.23c.56-.98.9-2.09.9-3.28zm-4.02.17c0-.06.02-.11.02-.17V5c0-1.66-1.34-3-3-3S9 3.34 9 5v.18l5.98 5.99zM4.27 3L3 4.27l6.01 6.01V11c0 1.66 1.33 3 2.99 3 .22 0 .44-.03.65-.08l1.66 1.66c-.71.33-1.5.52-2.31.52-2.76 0-5.3-2.1-5.3-5.1H5c0 3.41 2.72 6.23 6 6.72V21h2v-3.28c.91-.13 1.77-.45 2.54-.9L19.73 21 21 19.73 4.27 3z"/></svg>
<div class="t" style="left:3083px;top:1600px;font-size:31.5px;font-weight:bold;letter-spacing:-0.9px;color:#fff;text-shadow:0 1px 3px rgba(0,0,0,.55)">Валентин ...</div><!--TILES_END-->
<!-- BOTTOM BAR -->
<div class="t" style="left:49px;top:1739px;font-size:31px;letter-spacing:-1.5px">11:28</div>
<div class="a" style="left:143px;top:1738px;width:2px;height:32px;background:#d0d0d0"></div>
<div class="t" style="left:169px;top:1739px;font-size:31px;letter-spacing:2.4px">nky-cbau-zyy</div>

<div class="a" style="left:1116px;top:1706px;width:176px;height:96px;border-radius:28px;background:#5a1a17"></div>
<div class="a" style="left:1196px;top:1706px;width:96px;height:96px;border-radius:28px;background:#f5e0de"></div>
<div class="a" style="left:1308px;top:1706px;width:176px;height:96px;border-radius:28px;background:#5a1a17"></div>
<div class="a" style="left:1388px;top:1706px;width:96px;height:96px;border-radius:28px;background:#f5e0de"></div>
<div class="a" style="left:1500px;top:1706px;width:112px;height:96px;border-radius:48px;background:#333537"></div>
<div class="a" style="left:1628px;top:1706px;width:112px;height:96px;border-radius:48px;background:#333537"></div>
<div class="a" style="left:1756px;top:1706px;width:112px;height:96px;border-radius:48px;background:#333537"></div>
<div class="a" style="left:1884px;top:1706px;width:112px;height:96px;border-radius:48px;background:#333537"></div>
<div class="a" style="left:2012px;top:1706px;width:72px;height:96px;border-radius:36px;background:#333537"></div>
<div class="a" style="left:2100px;top:1706px;width:144px;height:96px;border-radius:48px;background:#cf463a"></div>
<svg class="a" style="left:1100px;top:1700px" width="1300" height="110" viewBox="1100 1700 1300 110" fill="none">
  <path d="M1153 1759L1162 1750L1171 1759" stroke="#f5dede" stroke-width="3.2"/>
  <path d="M1345 1759L1354 1750L1363 1759" stroke="#f5dede" stroke-width="3.2"/>
  <g stroke="#5a1a17" stroke-width="3.4">
    <path d="M1238 1747V1741A5.5 5.5 0 0 1 1249 1741V1752"/>
    <path d="M1231 1752A13 13 0 0 0 1244 1766A13 13 0 0 0 1257.5 1752" />
    <path d="M1244 1766V1772"/>
    <path d="M1224 1737L1261 1773" stroke-width="3.6"/>
  </g>
  <g stroke="#5a1a17" stroke-width="3.4" stroke-linejoin="round">
    <path d="M1418 1740H1436A3 3 0 0 1 1439 1743V1749L1448 1742V1764L1439 1757V1766A3 3 0 0 1 1436 1769H1418A3 3 0 0 1 1415 1766V1743A3 3 0 0 1 1418 1740Z"/>
    <path d="M1415 1736L1455 1776" stroke-width="3.6"/>
  </g>
  <g stroke="#e3e3e3" stroke-width="3.4">
    <rect x="1538" y="1737.5" width="36" height="27" rx="1.5"/>
    <path d="M1534 1770H1578" stroke-width="4"/>
    <path d="M1556 1760V1746M1549.5 1752L1556 1745.5L1562.5 1752" stroke-width="3.6"/>
    <circle cx="1684" cy="1754" r="18.5" stroke-width="3.6"/>
    <rect x="1795.5" y="1739.5" width="33" height="28.5" rx="1.5" stroke-width="3.4"/>
    <path d="M1809.5 1748.5H1802.5V1759.5H1809.5M1824.5 1748.5H1817.5V1759.5H1824.5" stroke-width="3.6"/>
    <path d="M1929 1769Q1919 1760 1920 1757L1925 1755L1932 1762V1737M1940 1756V1733M1948 1756V1735M1956 1756V1743V1768Q1956 1775 1944 1775Q1936 1775 1929 1769" stroke-width="3.2" stroke-linejoin="round" stroke-linecap="round"/>
  </g>
  <circle cx="1677" cy="1749" r="2.8" fill="#e3e3e3"/><circle cx="1691" cy="1749" r="2.8" fill="#e3e3e3"/>
  <path d="M1675 1759H1693A9 9 0 0 1 1675 1759Z" fill="#e3e3e3"/>
  <circle cx="2048" cy="1742" r="4" fill="#e3e3e3"/><circle cx="2048" cy="1754" r="4" fill="#e3e3e3"/><circle cx="2048" cy="1766" r="4" fill="#e3e3e3"/>
  <path d="M2152 1758Q2152 1748 2172 1748Q2192 1748 2192 1758L2186 1763L2180 1756V1753Q2172 1751 2164 1753V1756L2158 1763Z" stroke="#fff" stroke-width="3.4" stroke-linejoin="round"/>
</svg>
<svg class="a" style="left:3060px;top:1720px" width="280" height="70" viewBox="3060 1720 280 70">
  <circle cx="3096" cy="1754" r="18" fill="none" stroke="#fff" stroke-width="4"/>
  <circle cx="3096" cy="1746" r="2.6" fill="#fff"/><rect x="3093.5" y="1751.5" width="5" height="13" fill="#fff"/>
  <path d="M3176 1734H3208A4 4 0 0 1 3212 1738V1762A4 4 0 0 1 3208 1766H3180L3172 1774V1738A4 4 0 0 1 3176 1734Z" fill="#fff"/>
  <rect x="3176.5" y="1738" width="31.5" height="24" fill="#131313"/>
  <rect x="3180" y="1742" width="24" height="4" fill="#fff"/><rect x="3180" y="1748" width="24" height="4" fill="#fff"/><rect x="3180" y="1754" width="16" height="4" fill="#fff"/>
  <g fill="#fff"><circle cx="3276" cy="1742" r="4"/><circle cx="3288" cy="1742" r="4"/><circle cx="3300" cy="1742" r="4"/><circle cx="3276" cy="1754" r="4"/><circle cx="3288" cy="1754" r="4"/><circle cx="3300" cy="1754" r="4"/><circle cx="3276" cy="1766" r="4"/><circle cx="3288" cy="1766" r="4"/><circle cx="3300" cy="1766" r="4"/></g>
</svg>
<!-- top right icons -->
<svg class="a" style="left:3100px;top:0" width="260" height="100" viewBox="3100 0 260 100">
  <g fill="#fbdfc8">
    <path d="M3143 32H3152V40H3162V60L3158 56V45H3149L3143 39Z"/>
    <path d="M3128 41L3132 45V62H3149L3153 66H3128Z"/>
    <rect x="3134" y="47" width="4" height="4"/><rect x="3134" y="54" width="4" height="4"/><rect x="3141" y="54" width="4" height="4"/><rect x="3134" y="60" width="4" height="4"/><rect x="3141" y="60" width="4" height="4"/>
    <rect x="3151" y="47" width="4" height="4"/>
  </g>
  <path d="M3127 31L3161 65" stroke="#fbdfc8" stroke-width="3.4"/>
  <circle cx="3233" cy="47" r="31.5" fill="none" stroke="#38393c" stroke-width="1.2"/>
  <circle cx="3224" cy="35" r="13.5" fill="#2c3040"/>
  <circle cx="3224" cy="33" r="6" fill="#c9a793"/>
  <path d="M3212 42Q3224 36 3236 42L3236 48L3212 48Z" fill="#15161c"/>
  <circle cx="3247" cy="35.4" r="7" fill="#6a4a3a"/><circle cx="3247" cy="34" r="3" fill="#d8b0a0"/>
  <circle cx="3223.2" cy="61" r="8.3" fill="#1e5a45"/>
  <text x="3223.2" y="65.5" font-size="12" fill="#e8e8e8" text-anchor="middle" font-family="Liberation Sans, sans-serif">K</text>
  <circle cx="3245.7" cy="57" r="11" fill="#e35f35"/>
  <text x="3245.7" y="62.5" font-size="15" fill="#fff" text-anchor="middle" font-family="Liberation Sans, sans-serif">M</text>
</svg>
</body></html>
